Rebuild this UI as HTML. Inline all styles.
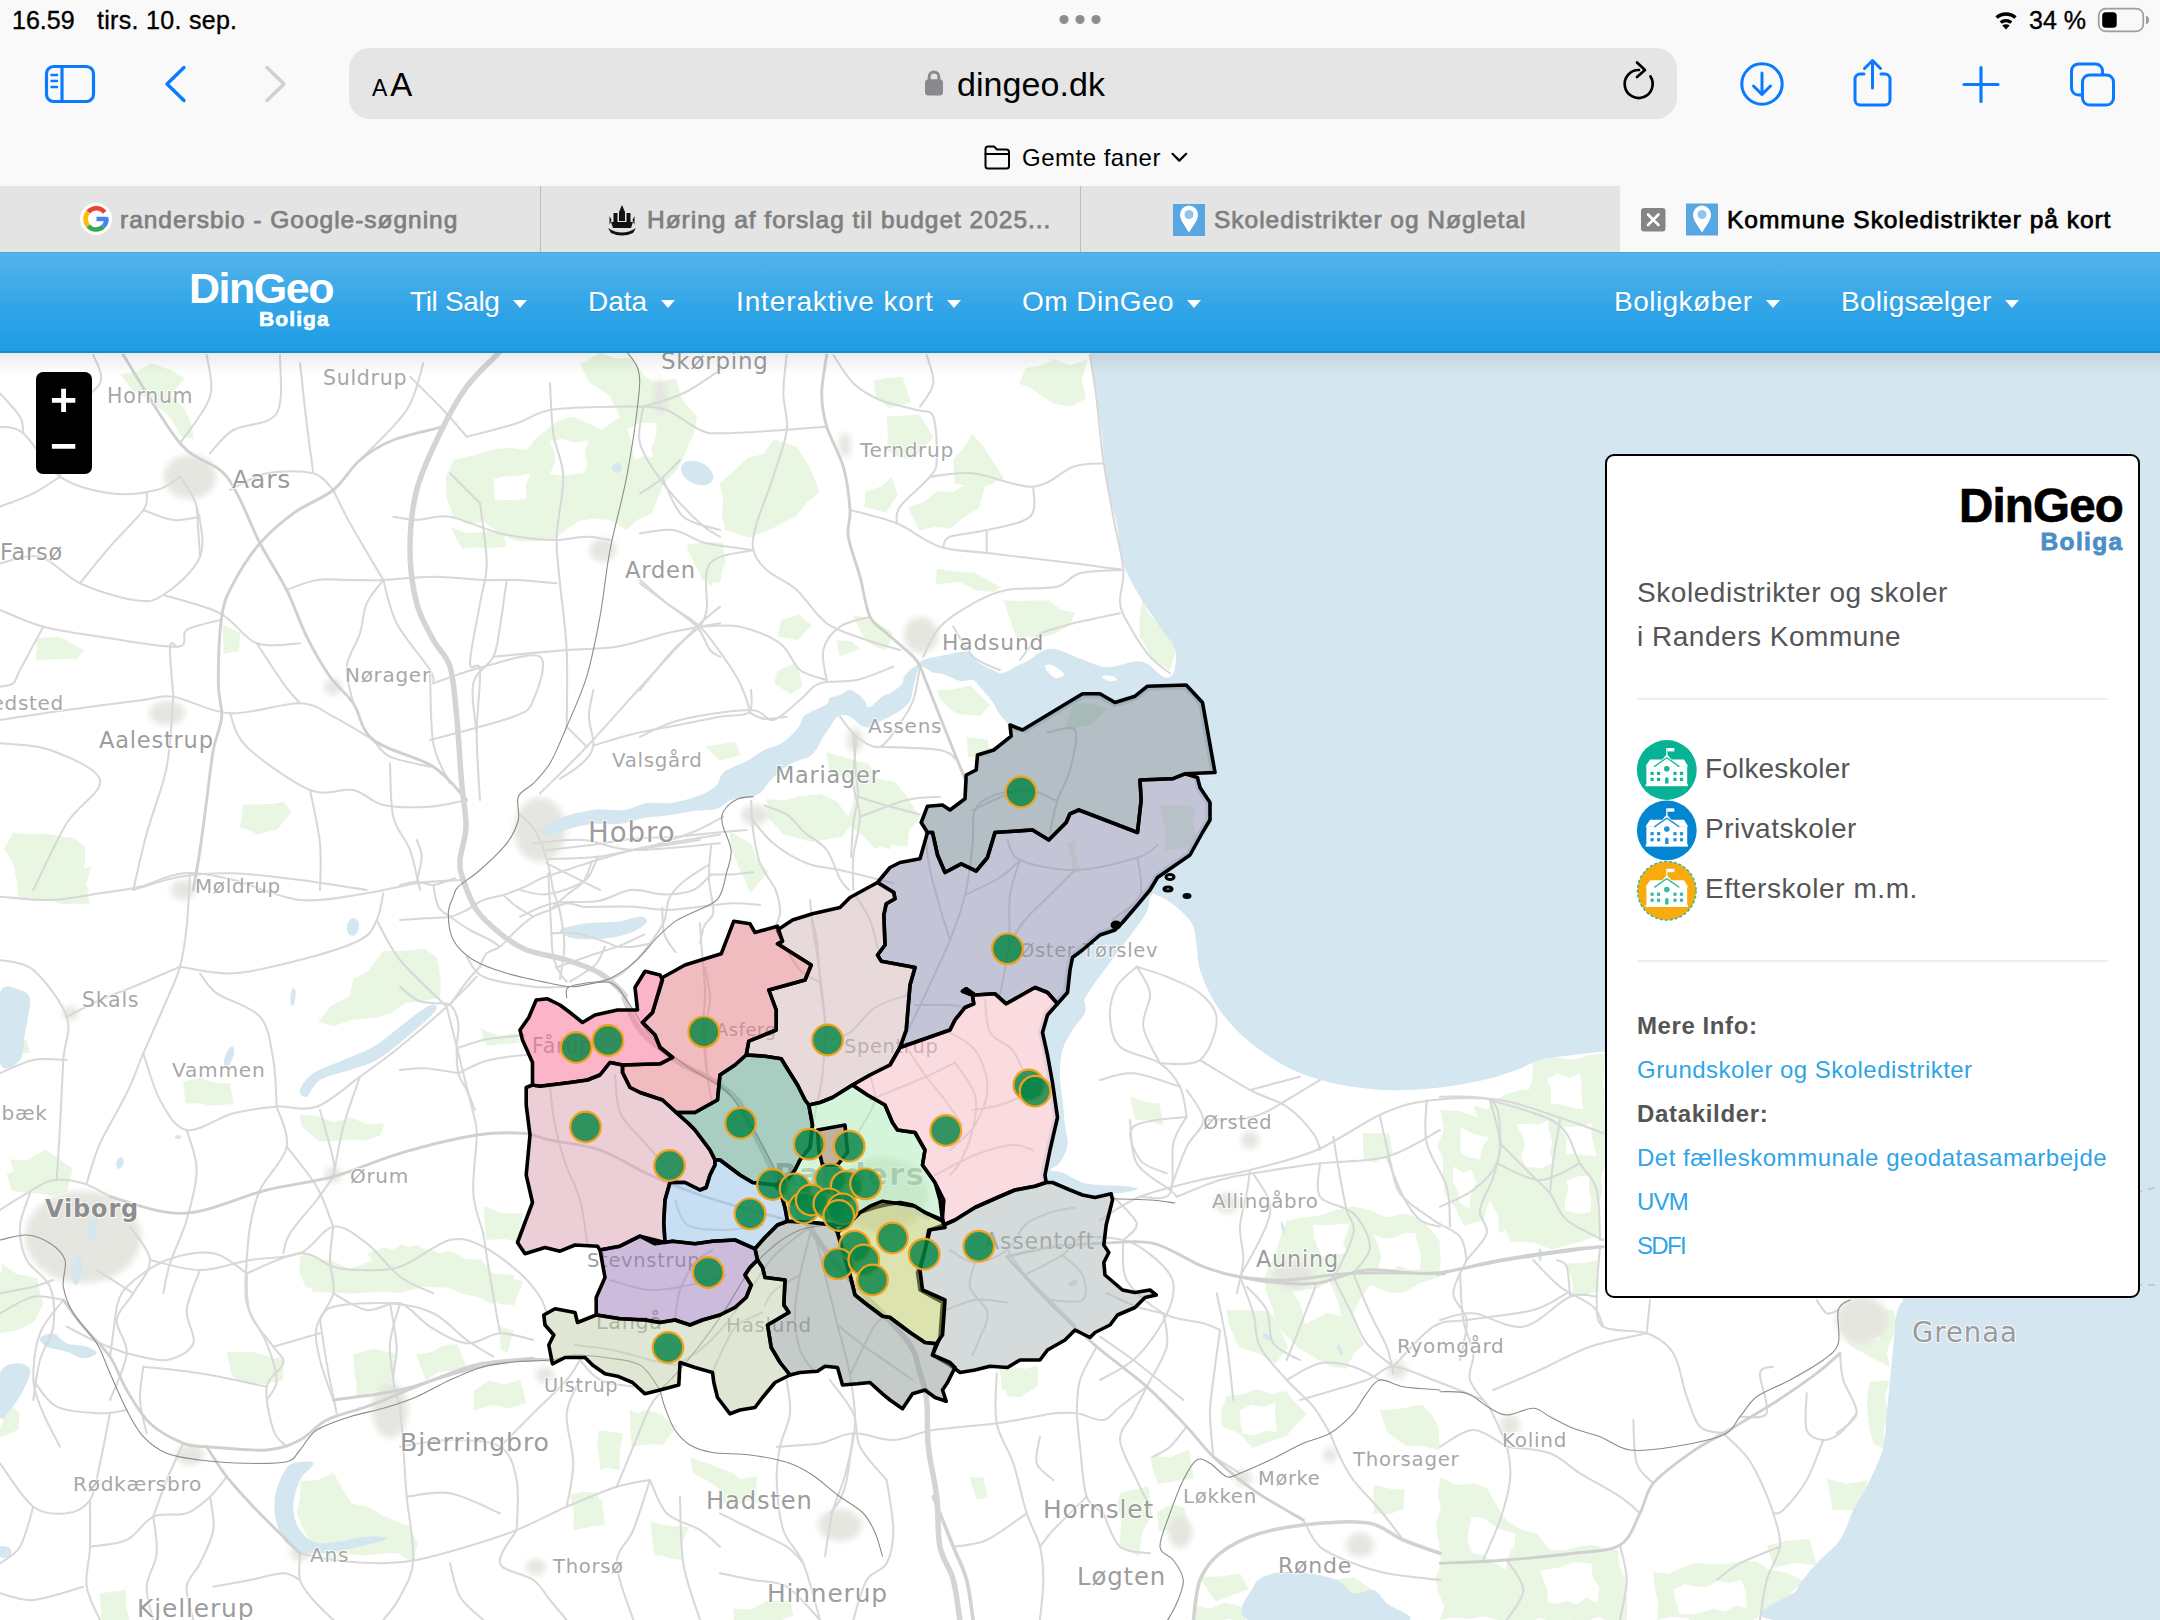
<!DOCTYPE html>
<html lang="da">
<head>
<meta charset="utf-8">
<title>Kommune Skoledistrikter på kort</title>
<style>
*{box-sizing:border-box;margin:0;padding:0}
html,body{width:2160px;height:1620px;overflow:hidden;background:#f9f9f9;font-family:"Liberation Sans",sans-serif}
.abs{position:absolute}
#chrome{position:absolute;left:0;top:0;width:2160px;height:252px;background:#f9f9f9}
.st{position:absolute;top:5px;font-size:25px;line-height:30px;color:#000;font-weight:400;-webkit-text-stroke:0.350px #000;white-space:nowrap}
#url{position:absolute;left:349px;top:48px;width:1328px;height:71px;border-radius:21px;background:#e5e5e6}
#url .aa{position:absolute;left:23px;top:15px;line-height:44px;color:#000;white-space:nowrap}
#url .host{position:absolute;left:608px;top:16px;font-size:34px;line-height:40px;color:#000;white-space:nowrap;letter-spacing:0.06px}
#gem{position:absolute;left:1022px;top:142px;font-size:24px;line-height:32px;color:#000;white-space:nowrap;letter-spacing:0.5px}
#tabs{position:absolute;left:0;top:186px;width:2160px;height:66px;background:#e4e4e4}
.tab{position:absolute;top:0;height:66px;width:540px;font-size:24.500px;line-height:66px;color:#7f7f7f;font-weight:400;-webkit-text-stroke:0.750px #7f7f7f;letter-spacing:0.98px;white-space:nowrap}
.tab span.t{position:absolute;top:1px;white-space:nowrap}
.tab.sep{border-left:1px solid #bdbdbd}
.tab.act{background:#f9f9f9;color:#000;-webkit-text-stroke:0.750px #000}
#nav{position:absolute;left:0;top:252px;width:2160px;height:101px;background:linear-gradient(#54b4eb 0%,#2fa4e7 60%,#1d9ce5 100%);border-bottom:2px solid #178acc;border-top:1px solid #4aa6dc}
.ni{position:absolute;top:283px;font-size:28px;line-height:38px;color:#fff;white-space:nowrap;text-shadow:0 1px 0 rgba(0,0,0,.1)}
.caret{position:absolute;top:300px;width:0;height:0;border-left:7.5px solid transparent;border-right:7.5px solid transparent;border-top:8px solid #fff}
#map{position:absolute;left:0;top:353px;width:2160px;height:1267px;background:#fff;overflow:hidden}
#zoom{position:absolute;left:36px;top:372px;width:56px;height:102px;background:#000;border-radius:7px}
#panel{position:absolute;left:1605px;top:454px;width:535px;height:844px;background:#fff;border:2px solid #000;border-radius:9px;color:#555}
#panel .p{margin-top:1.500px;position:absolute;left:30px;white-space:nowrap;font-size:28px;line-height:44px}
#panel a{color:#2fa4e7;text-decoration:none}
#panel hr{position:absolute;left:30px;width:471px;border:0;border-top:2px solid #eee}
</style>
</head>
<body>
<div id="chrome">
  <div class="st" style="left:12px">16.59</div>
  <div class="st" style="letter-spacing:0.3px;left:97px">tirs. 10. sep.</div>
  <div class="st" style="left:2029px">34 %</div>
  <div id="url">
    <div class="aa"><span style="font-size:23px">A</span><span style="font-size:33px;margin-left:3px">A</span></div>
    <div class="host">dingeo.dk</div>
  </div>
  <div id="gem">Gemte faner</div>
  <div id="tabs">
    <div class="tab" style="left:0"><span class="t" style="left:120px">randersbio - Google-søgning</span></div>
    <div class="tab sep" style="left:540px"><span class="t" style="left:106px">Høring af forslag til budget 2025...</span></div>
    <div class="tab sep" style="left:1080px"><span class="t" style="left:133px">Skoledistrikter og Nøgletal</span></div>
    <div class="tab act" style="left:1620px"><span class="t" style="left:107px">Kommune Skoledistrikter på kort</span></div>
  </div>

<svg class="abs" style="left:0;top:0" width="2160" height="252" viewBox="0 0 2160 252" fill="none" stroke-linecap="round" stroke-linejoin="round">
  <g fill="#8e8e93"><circle cx="1064" cy="19.5" r="4.6"/><circle cx="1080" cy="19.5" r="4.6"/><circle cx="1096" cy="19.5" r="4.6"/></g>
  <!-- sidebar -->
  <g stroke="#0a7aff" stroke-width="3.2">
    <rect x="46.5" y="66.5" width="47" height="35" rx="7"/>
    <path d="M62 67V101"/>
    <path d="M51.5 75H57M51.5 81H57M51.5 87H57" stroke-width="2.4"/>
    <path d="M184 67.5L167 84L184 100.5" stroke-width="3.4"/>
  </g>
  <path d="M267 67.5L284 84L267 100.5" stroke="#d0d0d2" stroke-width="3.4"/>
  <!-- lock -->
  <rect x="925" y="79.300" width="18" height="16.300" rx="3.500" fill="#8a8a8e"/>
  <path d="M929.200 81V76.800a4.800 4.800 0 0 1 9.600 0V81" stroke="#8a8a8e" stroke-width="3"/>
  <!-- reload -->
  <path d="M1650.5 76.5A14 14 0 1 1 1639 70" stroke="#000" stroke-width="2.7"/>
  <path d="M1637 62.5L1645 70L1637 77" stroke="#000" stroke-width="2.7"/>
  <!-- download -->
  <g stroke="#0a7aff" stroke-width="3">
    <circle cx="1762" cy="84" r="20.2"/>
    <path d="M1762 73V94M1753.5 86L1762 94.5L1770.5 86"/>
    <!-- share -->
    <path d="M1864 74H1860a5 5 0 0 0 -5 5V100a5 5 0 0 0 5 5H1885a5 5 0 0 0 5 -5V79a5 5 0 0 0 -5 -5H1881"/>
    <path d="M1872.5 61V88M1864.5 68.5L1872.5 60.5L1880.5 68.5"/>
    <!-- plus -->
    <path d="M1964 84.5H1998M1981 67.5V101.5" stroke-width="3.2"/>
    <!-- tabs -->
    <rect x="2071.500" y="64" width="31" height="31" rx="7"/>
    <rect x="2082.500" y="75" width="31" height="30" rx="7" fill="#f9f9f9"/>
  </g>
  <!-- wifi -->
  <g stroke="#000" stroke-width="3.4" stroke-linecap="butt">
    <path d="M1996.5 17.5A14.500 14.500 0 0 1 2015.500 17.500" />
    <path d="M2000.700 22.500A8.500 8.500 0 0 1 2011.300 22.500" />
  </g>
  <path d="M2006 29.500L2002.300 25.600A5.400 5.400 0 0 1 2009.700 25.600Z" fill="#000"/>
  <!-- battery -->
  <rect x="2098.700" y="8.700" width="44.600" height="22.600" rx="7" stroke="#9c9c9c" stroke-width="1.7"/>
  <rect x="2102.200" y="12.200" width="14.500" height="15.600" rx="3.500" fill="#000"/>
  <path d="M2146 15.500v9a4.800 4.800 0 0 0 0 -9Z" fill="#9c9c9c"/>
  <!-- folder -->
  <g stroke="#000" stroke-width="2">
   <path d="M985.500 152.500V149a2.500 2.500 0 0 1 2.500 -2.500H994l3 3H1006.500a2.500 2.500 0 0 1 2.500 2.500V166a2.500 2.500 0 0 1 -2.500 2.500H988a2.500 2.500 0 0 1 -2.500 -2.500Z"/>
   <path d="M985.500 154H1009"/>
   <path d="M1172.500 153.800L1179.300 160.600L1186.200 153.800" stroke-width="2.200"/>
  </g>
  <!-- google favicon -->
  <circle cx="96" cy="219" r="16" fill="#fff"/>
  <g stroke-width="4.600" stroke-linecap="butt">
    <path d="M104.600 212.300A10.500 10.500 0 0 0 88.200 212" stroke="#ea4335"/>
    <path d="M88.200 212A10.500 10.500 0 0 0 88.200 226" stroke="#fbbc05"/>
    <path d="M88.200 226A10.500 10.500 0 0 0 103.500 226.400" stroke="#34a853"/>
    <path d="M103.500 226.400A10.500 10.500 0 0 0 106.500 219H96.500" stroke="#4285f4"/>
  </g>
  <!-- randers favicon -->
  <g fill="#111">
    <path d="M622 205l3 7v9h-6v-9z"/><rect x="613.500" y="213" width="4" height="10"/><rect x="626.500" y="213" width="4" height="10"/>
    <path d="M611 222h22l-2 6h-18z"/><path d="M608 228q14 9 28 0l-3 5q-11 5 -22 0z"/>
    <path d="M609.500 216l2 4l-2 5zM634.500 216l-2 4l2 5z"/>
  </g>
  <!-- map-pin favicons -->
  <g>
    <rect x="1173" y="204" width="32" height="32" fill="#58a6e2"/>
    <path d="M1189 232.500c-5 -8 -9 -12.500 -9 -18a9 9 0 0 1 18 0c0 5.500 -4 10 -9 18z" fill="#fff"/>
    <circle cx="1189" cy="214.500" r="4.500" fill="#8ec4ee"/>
    <rect x="1686" y="203.500" width="32" height="32" fill="#58a6e2"/>
    <path d="M1702 232.500c-5 -8 -9 -12.500 -9 -18a9 9 0 0 1 18 0c0 5.500 -4 10 -9 18z" fill="#fff"/>
    <circle cx="1702" cy="214.500" r="4.500" fill="#8ec4ee"/>
  </g>
  <!-- close -->
  <rect x="1641" y="208" width="24.500" height="23.500" rx="3" fill="#858585"/>
  <path d="M1648 214.500L1658.500 225M1658.500 214.500L1648 225" stroke="#fff" stroke-width="2.600"/>
</svg>
</div>
<div id="nav"></div>
<div class="abs" id="logo1" style="left:189px;top:262px;font-size:43px;line-height:52px;font-weight:700;color:#fff;letter-spacing:-1.5px;white-space:nowrap">DinGeo</div>
<div class="abs" id="logo2" style="left:259px;top:305px;font-size:21px;line-height:28px;font-weight:700;color:#fff;white-space:nowrap;letter-spacing:1.1px;-webkit-text-stroke:0.7px #fff">Boliga</div>
<div class="ni" style="letter-spacing:-0.35px;left:410px">Til Salg</div><div class="caret" style="left:513px"></div>
<div class="ni" style="left:588px">Data</div><div class="caret" style="left:661px"></div>
<div class="ni" style="letter-spacing:0.87px;left:736px">Interaktive kort</div><div class="caret" style="left:947px"></div>
<div class="ni" style="letter-spacing:0.47px;left:1022px">Om DinGeo</div><div class="caret" style="left:1187px"></div>
<div class="ni" style="letter-spacing:0.47px;left:1614px">Boligkøber</div><div class="caret" style="left:1766px"></div>
<div class="ni" style="letter-spacing:0.24px;left:1841px">Boligsælger</div><div class="caret" style="left:2005px"></div>
<div id="map">
<!--MAPSTART--><svg style="position:absolute;left:0;top:-353px" width="2160" height="1620" viewBox="0 0 2160 1620" font-family="'DejaVu Sans','Liberation Sans',sans-serif">
<defs><filter id="bl" x="-50%" y="-50%" width="200%" height="200%"><feGaussianBlur stdDeviation="3"/></filter><linearGradient id="shd" x1="0" y1="0" x2="0" y2="1"><stop offset="0" stop-color="#000" stop-opacity=".075"/><stop offset="1" stop-color="#000" stop-opacity="0"/></linearGradient></defs>
<rect x="0" y="340" width="2160" height="1280" fill="#fff"/>
<g fill="#e9f7e2">
<path d="M453.8 459.8 L473.7 455.6 L493.3 449.3 L510 447.8 L526.8 450.1 L536.1 437.8 L547.6 429.1 L559.4 420 L573.4 416.5 L586.4 422.4 L601.6 430 L620 416.7 L609.2 395.1 L588.9 382.6 L580.4 364.3 L600 352.8 L616.6 358.7 L629.8 357.5 L641 370.8 L651.2 386.2 L666 390.3 L674.9 401.1 L682 415.2 L691.7 426.2 L686.9 450.1 L677.9 468.7 L663.9 483.5 L657.3 499.7 L651.6 513.4 L638.1 519.6 L626.6 530.2 L611.2 520.3 L594.3 518.6 L578.8 520.9 L566.5 529.6 L551.6 540.7 L533.7 541.4 L516.5 540.9 L501.8 534.4 L483.6 521.8 L467.3 524.4 L453.2 516.7 L446.5 497.5 L446.1 476.1Z"/>
<path d="M450 526.7 L466.7 533.1 L483.3 532.4 L502 529.2 L506.7 546.7 L491.2 548.3 L475.5 547.5 L462.3 548.8Z"/>
<path d="M120.4 374.1 L135.4 372.4 L151.4 362.9 L169.6 369.8 L184.6 377.9 L171.6 394.6 L185.2 410.3 L191.7 424.6 L193.5 439.1 L180.9 436.3 L174 423 L165.1 412.6 L149.7 400.5 L132.5 390.5Z"/>
<path d="M36.4 637.7 L59.8 637 L84.3 650.6 L76.7 659.1 L58.4 658.9 L36.1 660.6Z"/>
<path d="M222.7 624.5 L240.3 633 L238.6 650.9 L223.6 653.9Z"/>
<path d="M243.4 804.4 L257.9 804.4 L272.4 803.7 L283.1 801.8 L291.6 811.9 L277.4 829.6 L257.6 834.2 L239.7 826.7Z"/>
<path d="M13 832.6 L28 834.5 L43.3 833.2 L58.4 835.7 L73.6 837.9 L85.2 846.5 L85.3 861.7 L81.2 877.8 L90 891.1 L76 887.6 L62 892 L48 887.3 L34 887.9 L19.3 890.2 L15.9 876.6 L12.7 862.8 L4.1 849.1Z"/>
<path d="M686.5 545.1 L703 541.9 L718.6 543.3 L723.8 563.3 L720.1 583 L702.1 580.2 L696.9 565.8Z"/>
<path d="M640.2 374.3 L656.2 382.5 L676.3 378.4 L681.7 399.2 L697 417.1 L693.9 433.6 L687.8 446.1 L676.3 460.6 L660.4 465.5 L639.6 460 L639.6 443.3 L640 426.7 L637.2 410 L643 393.4Z"/>
<path d="M719.8 483 L734.3 470.7 L748.1 457.4 L763.6 454.3 L773.9 438.9 L796.7 446.7 L809.8 467.2 L819.7 492.3 L806.3 503.1 L796.4 515.7 L775.4 526.9 L749.7 537.8 L725.1 529.9 L721.8 514.5 L723.1 498.7Z"/>
<path d="M873.4 380.6 L888.2 377.7 L902.6 376.9 L911 402.4 L888.7 408 L876.2 396.7Z"/>
<path d="M886.7 416.3 L905 415.5 L919.8 414.8 L933.5 436.9 L923.2 448.3 L913.6 459.3 L899 457.7 L886.8 450 L887.9 433.4Z"/>
<path d="M953.1 459.9 L964.4 447.5 L972 434 L982.9 445.2 L989.8 456.9 L1003.8 477.7 L989.1 485.2 L974.2 487.4 L955 483.3Z"/>
<path d="M865.6 491.5 L880.9 486.4 L891.7 477.2 L897.8 494.5 L886.2 512.8 L864.3 506.7Z"/>
<path d="M907.9 507.2 L924.4 501.5 L936.9 491.4 L952.8 491.7 L967.5 483.5 L985.5 483.6 L979 508.2 L964.3 517.1 L950.2 528.5 L934.8 526.7 L919.2 530.4Z"/>
<path d="M1019.1 383.4 L1025.8 368.1 L1040.2 365.4 L1054.2 359.1 L1069.2 365.5 L1087.6 359.6 L1081.6 380.3 L1085.9 398.6 L1070.5 406.8 L1053.5 403.8 L1032.4 388.9Z"/>
<path d="M936.8 568.8 L955 571.5 L973.6 572.6 L986.9 579.6 L1000.6 587.3 L993.7 591.9 L976 590.4 L960 582.1 L935.7 584.4Z"/>
<path d="M1003.3 600.2 L1018.6 601.1 L1031.8 600.6 L1048.4 600.5 L1061.4 610 L1075.1 612.5 L1069.7 625.3 L1055.8 633.4 L1040.6 637.5 L1015.8 637.2 L1008.9 616.3Z"/>
<path d="M1142.3 598.3 L1148.8 614.2 L1161.3 626 L1176 650.4 L1170 670.1 L1153.3 660 L1139.8 636.7 L1139.6 618.4Z"/>
<path d="M853 614.9 L871.7 618.7 L893.1 633.2 L886.7 649.9 L873 645.9 L864.3 638.9Z"/>
<path d="M780.6 620.3 L798.8 614.5 L811.6 625 L798 639.9 L777.8 636.7Z"/>
<path d="M836.1 640.3 L851.9 641 L859.6 648.8 L839.8 656.7Z"/>
<path d="M777.5 670.7 L796.4 662.3 L803 686.3 L790.3 694 L773.9 683.3Z"/>
<path d="M937.1 690.5 L955.4 689 L970.4 685.3 L990.1 705 L980.1 715.9 L956.3 713.8 L940.3 699.9Z"/>
<path d="M826.2 751.9 L851.6 759.2 L868.3 763.5 L877.5 778.7 L894.9 781.9 L905.3 793.9 L920.1 818 L909.5 829.2 L907.3 846.4 L889.6 844.8 L874.7 848.6 L861.7 835 L846.2 823.2 L853.2 803.8 L855.3 779.4 L830 774.2Z"/>
<path d="M766.5 798.9 L784.1 800.4 L799.5 796.3 L820.4 794.1 L837.1 801.7 L852.6 822.3 L842.5 836.6 L827.6 839.3 L811.7 842.1 L797.4 838.3 L782.8 833.8 L767.5 816.7Z"/>
<path d="M686.9 548.9 L703.1 542.3 L722.5 542.5 L725.9 562.8 L710.8 586.4 L695.7 565.9Z"/>
<path d="M729.3 831.2 L751.7 844.1 L756.3 858.5 L769 871.5 L750.3 892.5 L739.6 869.5 L731.9 850.2Z"/>
<path d="M870.9 813.3 L896.6 823.7 L890.3 849.2 L870.4 843.7Z"/>
<path d="M966.6 737.1 L988.1 739.8 L990.5 756.9 L968.1 757Z"/>
<path d="M1073.3 703.6 L1088.5 703.1 L1106.8 709 L1089.8 725.3 L1064.2 729.4Z"/>
<path d="M1159.6 805.6 L1176.3 804.9 L1194.3 806.6 L1193.4 823.5 L1197.7 843.1 L1182.8 848.3 L1164.3 850.4 L1165.6 829.6Z"/>
<path d="M705.8 746.3 L735.4 741.9 L740.7 754.9 L719.6 761.1Z"/>
<path d="M1066.9 843.9 L1075.5 840.1 L1075.5 855.3 L1080.6 871.9 L1071.4 873.2 L1071.8 857.9Z"/>
<path d="M16.7 870.3 L31.4 870.1 L46.2 871.8 L60.8 871.6 L75.5 870.8 L91.2 866.7 L86 885 L89.9 904 L75.8 903.7 L61.7 904.3 L48 899.2 L33.7 901.1 L18 896.9Z"/>
<path d="M383.3 950.4 L397.9 951.1 L412.4 950 L424 948.6 L436.6 957.2 L439.1 969.5 L441.1 984.9 L439.6 997.8 L422.9 1001.1 L405.6 1003 L390.6 1013.6 L373.6 1017.9 L352.8 1019.8 L333.6 1026 L318.2 1021.7 L330.9 1005.7 L349.8 996 L353.4 978.8 L368.2 971.3Z"/>
<path d="M480.1 1028.5 L499.6 1036 L515.9 1033.3 L520 1042.9 L501.6 1044.1 L486.6 1046Z"/>
<path d="M183.2 1081.6 L200.2 1077.4 L216.6 1083.3 L230.2 1083.3 L233.5 1103.7 L217.8 1105.4 L202.3 1103.3 L185.5 1103.5Z"/>
<path d="M299.8 1114.5 L316.8 1116 L333.2 1122 L350.2 1117.2 L366.5 1124 L384.4 1123.6 L379.9 1135.7 L365.2 1140.5 L350.1 1139.7 L335.1 1141.3 L319.2 1141.3 L302 1126.7Z"/>
<path d="M300.8 1250.8 L317 1257.9 L334.2 1261.8 L349.6 1269.1 L366.9 1262.7 L383.9 1255.7 L400.4 1244.5 L416.9 1248.8 L433.9 1250.5 L448.9 1259.3 L467.4 1261.6 L482.1 1273.2 L503.7 1277.8 L492.3 1304.3 L478.2 1297.3 L463.1 1294 L448.8 1287.8 L432.9 1283.4 L416.6 1288.8 L400.2 1292.9 L383.4 1291.4 L366.6 1292.8 L349.9 1293.8 L333.3 1292.4 L312.6 1291.9 L310.1 1270.9Z"/>
<path d="M9.9 1159.6 L27.3 1160 L45.2 1149.5 L60.9 1159.9 L72.9 1168.4 L66.8 1191.8 L50.9 1195.5 L35.5 1192.5 L23.2 1188.9 L14.5 1175.2Z"/>
<path d="M226.8 1352.2 L241 1351.7 L255.2 1352 L268.9 1359.6 L282.6 1356.7 L283.4 1378.3 L265.6 1378.4 L247.7 1378.8 L232.1 1376.4Z"/>
<path d="M353.3 1354.6 L373.3 1349 L395.3 1353.3 L393.3 1382.5 L373.3 1377.9 L354.9 1380Z"/>
<path d="M483.7 1205.9 L501.5 1213.4 L523.2 1213.3 L520.3 1228.3 L520.2 1241.8 L503.6 1239 L486.3 1240 L485 1225Z"/>
<path d="M0.1 1035.9 L15 1038.7 L26.7 1040 L30 1052.9 L15 1052.5 L-4.2 1050Z"/>
<path d="M0.7 1271.4 L20.1 1280 L22.7 1295.8 L19.2 1311.2 L18.1 1330.3 L-4.4 1333.3 L-1.9 1318.3 L-3.4 1303.3 L-1.7 1288.3Z"/>
<path d="M186.4 1086.8 L206.8 1084.1 L225.9 1086.8 L230.5 1103.5 L209.6 1105.8 L190.1 1100Z"/>
<path d="M300.4 1255.4 L316.8 1261.1 L333.5 1266.4 L354.1 1281.2 L333.3 1293.2 L305.8 1286.9 L299.3 1272.6Z"/>
<path d="M366.8 1253.7 L382.9 1247.8 L400.3 1250.8 L417 1245 L432.6 1253.9 L450.6 1250.7 L465.8 1258.9 L481.2 1259.8 L491.7 1272.2 L505.3 1277.3 L523.4 1280.9 L513.8 1305.4 L499.1 1304.1 L486.7 1296.6 L474.4 1288.7 L459.7 1289.8 L444.7 1287.6 L429.6 1287.2 L414.6 1285.6 L400 1280 L387 1273.5 L375.7 1264.8Z"/>
<path d="M226.7 1352.8 L242.2 1355.9 L257.8 1353.2 L271.2 1357.6 L283.3 1379.9 L266.6 1384.1 L250 1384.1 L235.3 1379.4Z"/>
<path d="M356.7 1356.7 L372 1352.6 L373.8 1367.1 L381.4 1378.2 L396.7 1393.5 L378 1390.8 L356.3 1397 L356.7 1376.8Z"/>
<path d="M416 1354.5 L431.1 1352.3 L444.7 1344.9 L457.2 1344.1 L467.5 1369 L453.2 1370.7 L438.8 1371.9 L425.9 1380.4Z"/>
<path d="M473.9 1391 L488.3 1380.5 L504.7 1384.2 L520.1 1380 L526.4 1402.7 L510.1 1408.6 L493.1 1405.1 L473.7 1410.4Z"/>
<path d="M300.2 1481 L317.3 1480.1 L333.6 1473.1 L341.8 1487.8 L351.7 1503.6 L368.2 1506.8 L382.4 1515.3 L397.5 1521.9 L410.1 1526.7 L417.5 1543.3 L412.9 1562.9 L398.4 1553.3 L382.5 1553.3 L367.1 1555.4 L349.6 1554.5 L331.4 1562.3 L320.8 1551 L309.5 1540.2 L302.7 1527.5 L296.7 1513.3 L300.1 1496.7Z"/>
<path d="M598.8 1430.2 L623.3 1433.3 L619.5 1451.7 L620 1470.2 L600.8 1467 L597.3 1446.6Z"/>
<path d="M630 1409.6 L645 1417.4 L663.1 1413 L659.5 1430.2 L663.3 1443.6 L648.3 1444.5 L631.5 1446.9 L630.3 1430.1Z"/>
<path d="M578.8 1497.3 L602.8 1499.9 L600 1523.5 L580.2 1520Z"/>
<path d="M1.5 1262.9 L16.4 1274.1 L37.2 1278.1 L39.9 1293.4 L43.7 1303.7 L34.7 1321.3 L20 1329 L1.2 1333.3 L3.5 1316.7 L-4.3 1300 L2.1 1283.3Z"/>
<path d="M6.8 1174 L22.8 1167.4 L39.4 1167.8 L51.6 1176.9 L69 1183.4 L46.7 1193.8 L29.9 1193 L11.5 1190.7Z"/>
<path d="M1.2 1397.8 L19.5 1412.7 L18.7 1429.5 L-4.3 1440 L3.1 1420Z"/>
<path d="M650.2 1521.6 L668.3 1525.7 L688.8 1526.9 L682.2 1543.1 L683.2 1560.3 L668 1558.1 L656.8 1552.9 L654.3 1538Z"/>
<path d="M100 1593.3 L126.2 1590.1 L125.6 1605.3 L130 1621.6 L115 1621.6 L101.7 1620Z"/>
<path d="M630.6 1418.8 L644.5 1409.6 L657 1413 L677 1426.2 L662.4 1445.3 L638.5 1439.3Z"/>
<path d="M599.9 1444.5 L619.3 1439.8 L619.1 1461.4 L599.9 1470Z"/>
<path d="M690.1 1457.3 L714.5 1466 L732.9 1473 L746.7 1484.4 L760 1504.3 L737.2 1496.2 L720.9 1489.7 L706.5 1480.2 L692.7 1472.5Z"/>
<path d="M569.9 1494.2 L584.8 1491.8 L596.9 1493 L603 1508.7 L605 1524.7 L589.9 1527 L573.6 1530.2 L573.7 1512.3Z"/>
<path d="M650.8 1526.2 L675.6 1534.9 L680 1557.3 L654.5 1555.1Z"/>
<path d="M999.6 1366.2 L1022.6 1367.8 L1027.5 1385.8 L1001.7 1390.1Z"/>
<path d="M969.7 1477.2 L983.5 1477.5 L987.5 1497.8 L976.2 1499.6Z"/>
<path d="M499.3 1326.5 L513.6 1330.5 L507.5 1353 L500.9 1350Z"/>
<path d="M498.6 1273.4 L514.3 1275.3 L510 1290.4 L496.7 1290Z"/>
<path d="M999.7 1371.7 L1016.9 1371.1 L1037.6 1365.5 L1038.1 1386.1 L1020.6 1397.2 L1007.7 1396.1Z"/>
<path d="M1130.6 1096.2 L1149.2 1103.5 L1152.4 1112.4 L1135.4 1120.4Z"/>
<path d="M1264.8 1276 L1271.7 1262.5 L1277.2 1248.5 L1281.4 1234.1 L1286.8 1220.8 L1303.3 1217.4 L1320 1215.2 L1336.3 1209.8 L1353.8 1206.5 L1370.3 1210.3 L1386.3 1217.5 L1404 1213.3 L1420.9 1219.1 L1430.5 1229.5 L1439.5 1240 L1440.6 1260 L1438.9 1277 L1420.3 1282.9 L1403.4 1292.7 L1387.7 1292.6 L1370.6 1284.7 L1360.7 1298.1 L1353.6 1313.2 L1357.5 1331 L1364.3 1344.3 L1353.8 1353.8 L1346.2 1369.1 L1329.5 1365.8 L1315.2 1358.1 L1298.5 1348.1 L1285 1334.4 L1274.9 1322.2 L1272.3 1306.4 L1266 1292Z"/>
<path d="M1226.2 1309.9 L1246.7 1310.1 L1269.7 1311.5 L1279.6 1328.2 L1288.1 1347.7 L1275 1363.8 L1258.7 1353.4 L1238.8 1347.3 L1229.5 1326.8Z"/>
<path d="M1226.7 1396.3 L1241.6 1394.5 L1256.2 1389.3 L1272 1394.1 L1285.5 1391 L1295.5 1402.7 L1306.9 1413.4 L1295.5 1425.7 L1286 1436.6 L1269.7 1441.7 L1252.5 1447.9 L1240.3 1433.7 L1221.7 1426.5 L1221.3 1411.3Z"/>
<path d="M1149.8 1455.6 L1169.1 1457.3 L1189.3 1449.4 L1193.7 1478.5 L1176.8 1480.7 L1157.8 1484.1 L1153.3 1470.6Z"/>
<path d="M1120.3 1492.7 L1148.3 1486.5 L1152.3 1513.9 L1142.2 1532.6 L1138.9 1556.6 L1119.8 1546.7 L1120.5 1532.5 L1121 1518.3 L1116.8 1504.2Z"/>
<path d="M1367.2 1142.8 L1390.3 1136.2 L1389.4 1156.2 L1372.1 1163Z"/>
<path d="M1379.5 1410.2 L1399.8 1408.7 L1422.1 1404.6 L1431.6 1415.1 L1438.3 1426.7 L1439.7 1449.8 L1423.2 1446.3 L1405.6 1445.8 L1387.5 1432.6Z"/>
<path d="M1373.5 1484.7 L1390 1488.7 L1404.8 1489.7 L1403.3 1509.2 L1388.3 1514.5 L1373.6 1513.3Z"/>
<path d="M1320 1583.4 L1336.6 1579.6 L1353 1577.1 L1373.8 1590.9 L1354.6 1597.3 L1335.3 1594.4Z"/>
<path d="M1199.5 1576.8 L1220 1576.6 L1240 1573.3 L1248.9 1589.2 L1230.9 1595.6 L1215.6 1602Z"/>
<path d="M1193.3 1605 L1208.7 1608.8 L1224.6 1602.4 L1241 1606.2 L1246.7 1624.1 L1228.9 1618.7 L1211.1 1622.8 L1191.6 1620Z"/>
<path d="M733.4 1608.8 L751.3 1609.3 L768.6 1600.3 L790.8 1601.7 L793.3 1615.6 L778.3 1621.6 L763.3 1622.7 L748.3 1620 L733.8 1620Z"/>
<path d="M719.7 1477.3 L736.8 1479.4 L756.8 1476.2 L756.4 1496.4 L738.6 1504.4 L719.7 1503.3Z"/>
<path d="M1157 1512.6 L1171.2 1504.2 L1183.7 1507.2 L1190.2 1528.3 L1159.1 1531.4Z"/>
<path d="M1532.8 1060.2 L1552.8 1057.2 L1573.6 1059.7 L1588.3 1055.4 L1605.3 1053.3 L1604.8 1067.3 L1602.9 1081.3 L1604.9 1095.3 L1601.4 1109.3 L1606.7 1123.3 L1604.5 1137.3 L1605.3 1151.3 L1601 1165.3 L1600.3 1179.3 L1603.3 1193.2 L1583.4 1185.8 L1574.1 1163.8 L1558 1161.8 L1541.4 1167.9 L1532.6 1154.8 L1527.1 1140.3 L1531.8 1124.7 L1539.8 1115.7 L1528 1093.1 L1532.5 1078.4Z"/>
<path d="M1473.5 1105.8 L1502.8 1113 L1498 1130.4 L1503.7 1145.6 L1483.5 1139.9 L1480 1122.8Z"/>
<path d="M1362.8 1133 L1389 1133.4 L1393.3 1155.5 L1363.5 1160.5Z"/>
<path d="M1443 1157.3 L1459.6 1154.7 L1475.5 1157.5 L1484.4 1168.8 L1492.1 1179.7 L1489.6 1200.3 L1483.4 1220.4 L1463.2 1225.4 L1456 1208.9 L1444.6 1193.5 L1443 1176.9Z"/>
<path d="M1500.4 1189.6 L1515.3 1192.1 L1528.4 1196.5 L1531.4 1212 L1525.8 1222.8 L1511 1227 L1498.9 1233.5 L1498 1213.3Z"/>
<path d="M1130.1 1099.3 L1144.9 1102.2 L1159.5 1103.4 L1163.5 1125.9 L1148.9 1120.7 L1137.4 1119.3Z"/>
<path d="M1506.8 1093.7 L1522.2 1089.4 L1537.8 1089.5 L1553.3 1087 L1568.8 1084.3 L1584.4 1085.9 L1602.9 1086.5 L1604.2 1101.5 L1604.7 1116.5 L1606.7 1131.5 L1602.8 1146.7 L1606.2 1161.8 L1601.1 1176.7 L1602.8 1191.7 L1597.4 1206.6 L1599.1 1221.6 L1599.2 1234.4 L1582.9 1241 L1566 1245.6 L1551.4 1249.6 L1533.2 1242.4 L1510.6 1241.4 L1503.9 1226.4 L1496.1 1212 L1488.7 1199 L1476.2 1186.2 L1463.2 1178 L1446.6 1165.4 L1437 1146.7 L1443.8 1130 L1440.3 1109.8 L1460.3 1111.2 L1482.5 1119.2 L1492 1102Z"/>
<path d="M1843.3 1313.7 L1859.7 1308.8 L1876.5 1309.1 L1893.9 1310 L1896.8 1324.4 L1891.7 1338.4 L1886.8 1352.3 L1889.8 1367.3 L1871.5 1357.4 L1850.8 1346.3 L1840.7 1330.4Z"/>
<path d="M1870 1382.3 L1889.9 1380 L1884.7 1396.5 L1888 1413.3 L1883.6 1429.8 L1885.9 1449.9 L1873.2 1443.3 L1869.2 1427.6 L1867.3 1411.9 L1867.1 1396Z"/>
<path d="M1826.7 1478.8 L1846.7 1483.7 L1867.6 1480.3 L1864.2 1497.4 L1857.1 1510.5 L1832.3 1509.7 L1830.1 1494.8Z"/>
<path d="M1440.4 1477.3 L1456.3 1485 L1473.5 1483.3 L1487.2 1488.1 L1496 1504.5 L1506.3 1520.6 L1520.9 1529.3 L1537.7 1534.3 L1549.8 1550.2 L1563.9 1550.2 L1578.1 1546.8 L1592.2 1544.8 L1606 1548.8 L1618.5 1550.1 L1618.5 1564.3 L1625 1577.8 L1625.8 1591.8 L1627.6 1605.8 L1626.7 1620.8 L1612.3 1622.8 L1598 1616.7 L1583.6 1622.4 L1569.3 1619.6 L1554.9 1623.9 L1540.5 1617.8 L1526.2 1623.5 L1511.8 1623.9 L1497.4 1619.7 L1483.1 1616.3 L1468.7 1618.9 L1454.4 1617.8 L1439.6 1620 L1444.3 1606 L1437.7 1592 L1435.7 1578 L1440.7 1564 L1440.1 1550 L1437.3 1536 L1436.2 1522 L1440.8 1508 L1437.7 1494Z"/>
<path d="M1653.1 1572 L1668.2 1574 L1682 1567.6 L1696 1562.7 L1711.1 1564.2 L1725.9 1564.2 L1739.5 1561.5 L1756.2 1561.3 L1770 1570 L1785.9 1572.4 L1804 1581.3 L1791.5 1592 L1789.4 1606.1 L1786.7 1621.3 L1772.3 1617.5 L1757.8 1617.4 L1743.4 1624.4 L1728.9 1621.1 L1714.5 1621.8 L1700 1624.1 L1685.6 1617.8 L1671.1 1616.7 L1656.6 1620 L1658.5 1604.2 L1654.8 1588.8Z"/>
<path d="M1766.6 1545.8 L1786.3 1540.7 L1809.4 1538.9 L1816.9 1565.6 L1796.5 1562.7 L1774.7 1567.7Z"/>
<path d="M1566.1 1263.6 L1583.3 1263 L1597.6 1260 L1598.2 1276.7 L1599.7 1291.2 L1572.7 1296.8 L1572.6 1281.1Z"/>
</g>
<g fill="#fff">
<path d="M1516.1 1123.9 L1527.7 1124.1 L1539.3 1124.4 L1548.4 1120.1 L1549 1131 L1552.2 1141.6 L1550.1 1152.7 L1553.3 1163 L1540.4 1168.3 L1526.4 1166.8 L1520.7 1157.6 L1525.1 1145.9 L1522.7 1135.8Z"/>
<path d="M1566.8 1180.6 L1579.7 1175.9 L1589.6 1176.4 L1588.8 1188.6 L1591.4 1201.1 L1590.2 1212 L1578 1213.9 L1564.5 1210 L1565 1200 L1568.2 1190Z"/>
<path d="M1460.7 1127.3 L1473.1 1134.2 L1489.2 1137.4 L1481.7 1147.9 L1480.3 1159.2 L1469.7 1157.5 L1460.9 1153.3 L1460.5 1141.7Z"/>
<path d="M1471.6 1516.7 L1483.5 1518 L1492.5 1524.9 L1502.5 1530 L1515.5 1533.7 L1514.4 1545.1 L1508.1 1555.4 L1505.7 1569.5 L1494.1 1563.1 L1483.3 1554.8 L1473 1553.5 L1467.8 1543 L1468.3 1533 L1470.3 1523.1Z"/>
<path d="M1540.2 1570.4 L1550.8 1569 L1561.4 1567.2 L1571.8 1562.5 L1582.6 1562.6 L1591.6 1563.5 L1592 1575.8 L1599.4 1587.4 L1596.9 1602.7 L1586.5 1597.5 L1576.9 1604.4 L1566.6 1600.7 L1556.8 1604 L1547.8 1603.1 L1547.3 1590.6 L1542.9 1578.8Z"/>
<path d="M1673.6 1589.7 L1684.3 1584.4 L1695.8 1586.8 L1707 1586.9 L1717.6 1580.7 L1729.1 1583.3 L1741.3 1579.7 L1746 1592.7 L1746.8 1607.9 L1735.4 1605.8 L1724.7 1611.7 L1713.2 1608.7 L1702.4 1612.3 L1691.4 1614.8 L1679.5 1613.4 L1675.8 1600.2Z"/>
<path d="M1860.2 1325 L1872.1 1324.8 L1887.1 1320.5 L1878.1 1331.2 L1880.5 1340.8 L1859.8 1340.7Z"/>
<path d="M1292.6 1291.4 L1305.8 1289.5 L1319.1 1288 L1328.8 1280.4 L1333.5 1291.1 L1338.1 1301.8 L1340.8 1316.1 L1327.8 1312.8 L1317.2 1318 L1304.9 1324.1 L1302.9 1313 L1299.3 1302.6Z"/>
<path d="M1373 1233.8 L1383.5 1238.4 L1393.6 1238 L1403.2 1233.2 L1415.1 1232.9 L1417.9 1244 L1421.1 1254.9 L1420.2 1269 L1410.2 1269.9 L1399.8 1265.5 L1390.2 1271.6 L1377.6 1270.5 L1381.1 1258.2 L1378.8 1247.1Z"/>
<path d="M1313.1 1224.9 L1324.4 1225.2 L1335.6 1224.8 L1349.9 1223.3 L1346.7 1233.3 L1343 1243.3 L1346.6 1252.8 L1333.3 1254.9 L1322.3 1256.2 L1317.4 1246.8 L1313.8 1237.1Z"/>
<path d="M1240.4 1410.2 L1251 1404.7 L1262.5 1407 L1275.3 1403 L1275.1 1416.6 L1276.9 1431.8 L1265.5 1430.8 L1254.8 1435.6 L1242.6 1433.4 L1240.2 1420.2Z"/>
<path d="M1547 1079.3 L1557.6 1073.3 L1569.3 1078 L1580 1073.3 L1581.9 1084.4 L1581.3 1095.7 L1583 1109.3 L1573 1108 L1563.2 1105.1 L1551.2 1103.8 L1551.3 1089.7Z"/>
<path d="M1560 1126.6 L1571.2 1126.9 L1582.3 1125.4 L1591.7 1123.5 L1591.2 1133.7 L1593.6 1143.5 L1596.7 1156 L1586.7 1155.5 L1576.7 1153.7 L1565.8 1153.5 L1566.9 1139.1Z"/>
<path d="M1453.3 1166.2 L1463.3 1172.9 L1471.5 1169.8 L1476 1182.6 L1470.7 1194.4 L1469.5 1208.7 L1459.7 1203 L1458.4 1191.9 L1452.9 1181.3Z"/>
<path d="M549.8 441.2 L561.9 439 L574.6 442.4 L588.7 440.2 L584.6 452.1 L587.2 464.7 L583.7 472.9 L573.5 474.2 L563.1 476.1 L549.8 473.7 L554.9 463 L554.3 453Z"/>
<path d="M627.1 429.8 L639.7 422.6 L656.4 423.3 L656.4 435.5 L651.3 447.8 L653.3 457.1 L643.3 456.1 L634.7 459.7 L632.2 448.7 L630.4 437.5Z"/>
<path d="M493.6 479.3 L504.5 476.4 L515.7 476.2 L530.6 473.3 L525.5 486.6 L526.7 498.1 L516.7 500.2 L506.7 500.1 L494.7 500.3 L494.3 488.5Z"/>
</g>
<g fill="#e4e6df" filter="url(#bl)">
<ellipse cx="190" cy="477" rx="26" ry="22"/>
<ellipse cx="167" cy="713" rx="18" ry="12"/>
<ellipse cx="540" cy="830" rx="26" ry="32"/>
<ellipse cx="333" cy="687" rx="9" ry="8"/>
<ellipse cx="603" cy="550" rx="13" ry="12"/>
<ellipse cx="183" cy="890" rx="12" ry="10"/>
<ellipse cx="921" cy="635" rx="17" ry="18"/>
<ellipse cx="845" cy="445" rx="6" ry="12"/>
<ellipse cx="855" cy="740" rx="8" ry="12"/>
<ellipse cx="755" cy="815" rx="14" ry="10"/>
<ellipse cx="83" cy="1237" rx="58" ry="46"/>
<ellipse cx="333" cy="1175" rx="8" ry="8"/>
<ellipse cx="390" cy="1410" rx="18" ry="28"/>
<ellipse cx="190" cy="1455" rx="14" ry="10"/>
<ellipse cx="300" cy="1553" rx="10" ry="8"/>
<ellipse cx="70" cy="1013" rx="8" ry="7"/>
<ellipse cx="1250" cy="1140" rx="9" ry="9"/>
<ellipse cx="1227" cy="1203" rx="13" ry="10"/>
<ellipse cx="1293" cy="1275" rx="20" ry="14"/>
<ellipse cx="1397" cy="1370" rx="10" ry="9"/>
<ellipse cx="1243" cy="1478" rx="9" ry="8"/>
<ellipse cx="1180" cy="1532" rx="12" ry="16"/>
<ellipse cx="1510" cy="1425" rx="10" ry="10"/>
<ellipse cx="1862" cy="1320" rx="26" ry="24"/>
<ellipse cx="1330" cy="1455" rx="7" ry="7"/>
<ellipse cx="1360" cy="1545" rx="14" ry="12"/>
<ellipse cx="840" cy="1525" rx="22" ry="16"/>
<ellipse cx="545" cy="1375" rx="9" ry="8"/>
<ellipse cx="536" cy="1567" rx="10" ry="8"/>
<ellipse cx="882" cy="1195" rx="46" ry="38"/>
<ellipse cx="660" cy="397" rx="7" ry="18"/>
</g>
<g fill="#d4e6f0">
<path d="M1090 351.7 C1090.8 358.1 1093.0 369.7 1095 383.3 C1097.0 396.9 1099.8 416.6 1101.7 433.3 C1103.7 450.0 1104.2 468.3 1106.7 483.3 C1109.2 498.3 1113.9 510.0 1116.7 523.3 C1119.5 536.6 1119.4 551.1 1123.3 563.3 C1127.2 575.5 1133.9 586.1 1140 596.7 C1146.1 607.3 1154.2 617.8 1160 626.7 C1165.8 635.6 1172.8 642.2 1175 650 C1177.2 657.8 1175.2 668.8 1173.3 673.3 C1171.3 677.8 1167.7 678.4 1163.3 676.7 C1158.9 675.0 1151.7 665.8 1146.7 663.3 C1141.7 660.8 1137.8 661.4 1133.3 661.7 C1128.8 662.0 1124.9 664.1 1120 665 C1115.1 665.9 1110.5 668.0 1104 667 C1097.5 666.0 1088.5 661.8 1081 659 C1073.5 656.2 1064.2 651.7 1059 650 C1053.8 648.3 1053.2 648.7 1050 649 C1046.8 649.3 1043.2 650.3 1040 652 C1036.8 653.7 1034.5 656.8 1031 659 C1027.5 661.2 1023.7 662.7 1019 665 C1014.3 667.3 1007.3 672.2 1003 673 C998.7 673.8 997.2 671.8 993 670 C988.8 668.2 981.8 664.8 978 662 C974.2 659.2 973.0 654.7 970 653 C967.0 651.3 964.2 651.7 960 652 C955.8 652.3 950.0 654.0 945 655 C940.0 656.0 934.0 657.0 930 658 C926.0 659.0 923.2 659.8 921 661 C918.8 662.2 918.8 663.5 917 665 C915.2 666.5 912.2 668.0 910 670 C907.8 672.0 905.3 674.7 904 677 C902.7 679.3 904.0 681.5 902 684 C900.0 686.5 895.2 690.0 892 692 C888.8 694.0 886.0 694.0 883 696 C880.0 698.0 876.5 702.2 874 704 C871.5 705.8 869.5 707.5 868 707 C866.5 706.5 866.5 703.0 865 701 C863.5 699.0 861.5 696.8 859 695 C856.5 693.2 853.2 690.0 850 690 C846.8 690.0 843.3 693.7 840 695 C836.7 696.3 832.2 696.5 830 698 C827.8 699.5 829.5 702.0 827 704 C824.5 706.0 818.8 708.0 815 710 C811.2 712.0 806.8 713.0 804 716 C801.2 719.0 801.7 723.5 798 728 C794.3 732.5 787.7 739.3 782 743 C776.3 746.7 769.8 747.0 764 750 C758.2 753.0 753.7 757.3 747 761 C740.3 764.7 729.2 767.8 724 772 C718.8 776.2 720.3 782.0 716 786 C711.7 790.0 705.5 793.2 698 796 C690.5 798.8 679.5 801.8 671 803 C662.5 804.2 654.8 801.8 647 803 C639.2 804.2 633.0 808.8 624 810 C615.0 811.2 603.7 808.7 593 810 C582.3 811.3 568.5 815.0 560 818 C551.5 821.0 545.0 825.5 542 828 C539.0 830.5 540.8 831.8 542 833 C543.2 834.2 544.5 835.7 549 835 C553.5 834.3 561.7 830.8 569 829 C576.3 827.2 584.5 824.8 593 824 C601.5 823.2 611.5 825.0 620 824 C628.5 823.0 635.5 819.5 644 818 C652.5 816.5 662.8 816.2 671 815 C679.2 813.8 685.5 812.0 693 811 C700.5 810.0 709.7 810.8 716 809 C722.3 807.2 725.8 801.8 731 800 C736.2 798.2 742.2 799.2 747 798 C751.8 796.8 756.0 796.0 760 793 C764.0 790.0 766.5 784.5 771 780 C775.5 775.5 782.2 769.3 787 766 C791.8 762.7 796.3 761.5 800 760 C803.7 758.5 806.3 758.7 809 757 C811.7 755.3 813.8 753.0 816 750 C818.2 747.0 819.7 742.8 822 739 C824.3 735.2 827.5 730.7 830 727 C832.5 723.3 834.3 719.0 837 717 C839.7 715.0 843.3 714.8 846 715 C848.7 715.2 850.3 716.7 853 718.5 C855.7 720.3 859.0 724.6 862 726 C865.0 727.4 868.0 727.8 871 727 C874.0 726.2 877.0 723.2 880 721.5 C883.0 719.8 885.5 718.9 889 717 C892.5 715.1 897.5 712.7 901 710 C904.5 707.3 908.0 704.5 910 701 C912.0 697.5 912.0 693.0 913 689 C914.0 685.0 915.1 680.5 916 677 C916.9 673.5 917.3 669.7 918.5 668 C919.7 666.3 921.2 666.7 923 667 C924.8 667.3 927.3 669.1 929 670 C930.7 670.9 930.8 671.9 933 672.6 C935.2 673.3 939.2 673.3 942 674 C944.8 674.7 947.5 676.0 950 677 C952.5 678.0 954.8 679.3 957 680 C959.2 680.7 960.3 681.0 963 681 C965.7 681.0 970.3 679.2 973 680 C975.7 680.8 976.7 683.5 979 686 C981.3 688.5 984.5 692.0 987 695 C989.5 698.0 992.1 701.1 994 704 C995.9 706.9 996.5 709.7 998.5 712.6 C1000.5 715.5 1004.1 719.3 1006 721.5 C1007.9 723.7 1007.2 724.6 1010 726 C1012.8 727.4 1010.4 735.4 1022.5 730 C1034.6 724.6 1069.6 699.8 1082.5 693.8 C1095.4 687.8 1094.6 692.3 1100 693.8 C1105.4 695.2 1109.2 702.1 1115 702.5 C1120.8 702.9 1129.6 698.9 1135 696.2 C1140.4 693.5 1139.0 688.1 1147.5 686.2 C1156.0 684.3 1177.0 682.3 1186.2 685 C1195.4 687.7 1197.7 687.9 1202.5 702.5 C1207.3 717.1 1215.8 760.0 1215 772.5 C1214.2 785.0 1200.0 775.0 1197.5 777.5 C1195.0 780.0 1197.9 783.3 1200 787.5 C1202.1 791.7 1208.3 797.1 1210 802.5 C1211.7 807.9 1211.2 815.0 1210 820 C1208.8 825.0 1205.8 826.7 1202.5 832.5 C1199.2 838.3 1197.5 847.5 1190 855 C1182.5 862.5 1164.2 871.7 1157.5 877.5 C1150.8 883.3 1153.3 885.4 1150 890 C1146.7 894.6 1142.1 899.6 1137.5 905 C1132.9 910.4 1126.2 918.3 1122.5 922.5 C1118.8 926.7 1118.8 927.9 1115 930 C1111.2 932.1 1105.4 931.7 1100 935 C1094.6 938.3 1087.1 946.2 1082.5 950 C1077.9 953.8 1074.6 954.2 1072.5 957.5 C1070.4 960.8 1070.8 964.2 1070 970 C1069.2 975.8 1069.6 986.9 1067.5 992.5 C1065.4 998.1 1059.2 1001.9 1057.5 1003.8 C1055.8 1005.7 1059.2 1001.9 1057.5 1003.8 C1055.8 1005.7 1050.0 1010.2 1047.5 1015 C1045.0 1019.8 1042.5 1025.8 1042.5 1032.5 C1042.5 1039.2 1045.8 1046.7 1047.5 1055 C1049.2 1063.3 1050.8 1072.1 1052.5 1082.5 C1054.2 1092.9 1057.9 1106.2 1057.5 1117.5 C1057.1 1128.8 1052.1 1140.4 1050 1150 C1047.9 1159.6 1045.6 1169.6 1045 1175 C1044.4 1180.4 1045.0 1181.2 1046.2 1182.5 C1047.5 1183.8 1048.5 1181.2 1052.5 1182.5 C1056.5 1183.8 1065.0 1187.9 1070 1190 C1075.0 1192.1 1078.3 1193.8 1082.5 1195 C1086.7 1196.2 1090.2 1197.7 1095 1197.5 C1099.8 1197.3 1106.2 1194.6 1111.2 1193.8 C1116.2 1193.0 1120.6 1193.3 1125 1192.5 C1129.4 1191.7 1137.5 1189.8 1137.5 1188.8 C1137.5 1187.8 1131.2 1186.8 1125 1186.2 C1118.8 1185.6 1107.1 1185.6 1100 1185 C1092.9 1184.4 1088.8 1184.6 1082.5 1182.5 C1076.2 1180.4 1067.9 1174.6 1062.5 1172.5 C1057.1 1170.4 1050.4 1171.7 1050 1170 C1049.6 1168.3 1057.1 1166.7 1060 1162.5 C1062.9 1158.3 1066.7 1151.2 1067.5 1145 C1068.3 1138.8 1065.8 1132.5 1065 1125 C1064.2 1117.5 1063.3 1108.3 1062.5 1100 C1061.7 1091.7 1060.0 1083.3 1060 1075 C1060.0 1066.7 1060.4 1057.5 1062.5 1050 C1064.6 1042.5 1068.8 1036.2 1072.5 1030 C1076.2 1023.8 1083.3 1017.5 1085 1012.5 C1086.7 1007.5 1084.6 998.8 1082.5 1000 C1080.4 1001.2 1071.2 1021.7 1072.5 1020 C1073.8 1018.3 1083.8 999.6 1090 990 C1096.2 980.4 1102.9 972.1 1110 962.5 C1117.1 952.9 1126.2 941.2 1132.5 932.5 C1138.8 923.8 1144.6 917.1 1147.5 910 C1150.4 902.9 1149.6 893.0 1150 890 C1150.4 887.0 1147.2 890.0 1150 891.7 C1152.8 893.4 1161.2 896.4 1166.7 900 C1172.2 903.6 1178.9 908.8 1183.3 913.3 C1187.7 917.8 1191.1 921.1 1193.3 926.7 C1195.5 932.3 1195.6 939.5 1196.7 946.7 C1197.8 953.9 1197.2 961.1 1200 970 C1202.8 978.9 1207.8 990.5 1213.3 1000 C1218.8 1009.5 1225.5 1018.4 1233.3 1026.7 C1241.1 1035.0 1250.0 1042.8 1260 1050 C1270.0 1057.2 1281.1 1064.5 1293.3 1070 C1305.5 1075.5 1318.3 1080.0 1333.3 1083.3 C1348.3 1086.6 1366.6 1089.2 1383.3 1090 C1400.0 1090.8 1416.6 1090.0 1433.3 1088.3 C1450.0 1086.6 1469.4 1083.0 1483.3 1080 C1497.2 1077.0 1507.2 1073.3 1516.7 1070 C1526.2 1066.7 1530.6 1062.5 1540 1060 C1549.4 1057.5 1562.8 1056.4 1573.3 1055 C1583.8 1053.6 1590.5 1052.5 1603.3 1051.7 C1616.1 1050.9 1625.5 1045.3 1650 1050 C1674.5 1054.7 1720.0 1063.3 1750 1080 C1780.0 1096.7 1808.3 1125.0 1830 1150 C1851.7 1175.0 1867.8 1205.0 1880 1230 C1892.2 1255.0 1899.1 1288.3 1903 1300 C1906.9 1311.7 1904.3 1297.8 1903.3 1300 C1902.2 1302.2 1898.4 1305.5 1896.7 1313.3 C1895.0 1321.1 1894.4 1335.6 1893.3 1346.7 C1892.2 1357.8 1891.1 1368.9 1890 1380 C1888.9 1391.1 1887.8 1402.2 1886.7 1413.3 C1885.6 1424.4 1886.1 1435.6 1883.3 1446.7 C1880.5 1457.8 1875.0 1469.5 1870 1480 C1865.0 1490.5 1858.3 1500.0 1853.3 1510 C1848.3 1520.0 1846.1 1531.1 1840 1540 C1833.9 1548.9 1823.9 1555.0 1816.7 1563.3 C1809.5 1571.6 1801.7 1580.3 1796.7 1590 C1791.7 1599.7 1725.3 1615.9 1786.7 1621.7 C1848.1 1627.5 2101.9 1837.8 2165 1625 C2228.1 1412.2 2344.2 558.3 2165 345 C1985.8 131.7 1269.2 343.9 1090 345 C910.8 346.1 1089.2 345.3 1090 351.7Z"/>
<path d="M1253.3 1621.7 C1228.3 1615.9 1250.0 1594.8 1253.3 1586.7 C1256.6 1578.6 1264.4 1575.5 1273.3 1573.3 C1282.2 1571.1 1296.1 1572.2 1306.7 1573.3 C1317.3 1574.4 1328.9 1576.7 1336.7 1580 C1344.5 1583.3 1347.2 1591.6 1353.3 1593.3 C1359.4 1595.0 1367.7 1588.3 1373.3 1590 C1378.9 1591.7 1381.7 1598.0 1386.7 1603.3 C1391.7 1608.6 1425.5 1618.6 1403.3 1621.7 C1381.1 1624.8 1278.3 1627.5 1253.3 1621.7Z"/>
<ellipse cx="697" cy="473" rx="17" ry="11" transform="rotate(25 697 473)"/>
<ellipse cx="617" cy="468" rx="5" ry="5" transform="rotate(0 617 468)"/>
<ellipse cx="353" cy="927" rx="6" ry="9" transform="rotate(10 353 927)"/>
<ellipse cx="293" cy="997" rx="2.5" ry="9" transform="rotate(5 293 997)"/>
<ellipse cx="229" cy="1057" rx="4" ry="11" transform="rotate(20 229 1057)"/>
<ellipse cx="120" cy="1163" rx="3.5" ry="6" transform="rotate(15 120 1163)"/>
<ellipse cx="178" cy="1137" rx="3" ry="2" transform="rotate(0 178 1137)"/>
<ellipse cx="93" cy="1230" rx="4" ry="13" transform="rotate(8 93 1230)"/>
<ellipse cx="77" cy="1270" rx="5" ry="15" transform="rotate(5 77 1270)"/>
<ellipse cx="1073" cy="1283" rx="5" ry="2.5" transform="rotate(-25 1073 1283)"/>
<ellipse cx="1283" cy="1228" rx="1.5" ry="7" transform="rotate(-15 1283 1228)"/>
<ellipse cx="1540" cy="1255" rx="2" ry="7" transform="rotate(0 1540 1255)"/>
<ellipse cx="1340" cy="1350" rx="2" ry="6" transform="rotate(-20 1340 1350)"/>
<ellipse cx="1267" cy="1337" rx="5" ry="2.5" transform="rotate(30 1267 1337)"/>
<path d="M300 1090 C301.1 1086.1 306.1 1078.3 313.3 1073.3 C320.5 1068.3 333.3 1064.4 343.3 1060 C353.3 1055.6 363.9 1052.2 373.3 1046.7 C382.8 1041.2 391.1 1033.4 400 1026.7 C408.9 1020.0 420.6 1010.0 426.7 1006.7 C432.8 1003.4 436.1 1005.0 436.7 1006.7 C437.2 1008.4 435.6 1011.2 430 1016.7 C424.4 1022.2 412.2 1032.8 403.3 1040 C394.4 1047.2 385.6 1055.0 376.7 1060 C367.8 1065.0 359.4 1066.7 350 1070 C340.6 1073.3 327.2 1075.5 320 1080 C312.8 1084.5 310.0 1095.0 306.7 1096.7 C303.4 1098.4 298.9 1093.9 300 1090Z"/>
<path d="M560 930 C562.2 927.5 577.2 924.7 586.7 923.3 C596.2 921.9 607.8 922.8 616.7 921.7 C625.6 920.6 635.0 916.7 640 916.7 C645.0 916.7 647.8 919.2 646.7 921.7 C645.6 924.2 640.0 928.9 633.3 931.7 C626.6 934.5 616.7 937.2 606.7 938.3 C596.7 939.4 581.1 939.7 573.3 938.3 C565.5 936.9 557.8 932.5 560 930Z"/>
<path d="M0 993.3 C3.3 981.1 15.0 988.9 20 990 C25.0 991.1 29.2 992.8 30 1000 C30.8 1007.2 26.7 1023.3 25 1033.3 C23.3 1043.3 24.2 1055.0 20 1060 C15.8 1065.0 3.3 1074.4 0 1063.3 C-3.3 1052.2 -3.3 1005.5 0 993.3Z"/>
<path d="M293.3 1463.3 C298.3 1461.6 312.2 1460.5 313.3 1463.3 C314.4 1466.1 303.3 1472.8 300 1480 C296.7 1487.2 293.3 1498.4 293.3 1506.7 C293.3 1515.0 295.6 1523.9 300 1530 C304.4 1536.1 308.9 1542.2 320 1543.3 C331.1 1544.4 355.6 1537.5 366.7 1536.7 C377.8 1535.9 386.7 1536.9 386.7 1538.3 C386.7 1539.7 378.4 1542.5 366.7 1545 C355.0 1547.5 329.5 1553.0 316.7 1553.3 C303.9 1553.6 296.7 1551.7 290 1546.7 C283.3 1541.7 279.2 1531.6 276.7 1523.3 C274.2 1515.0 273.9 1505.0 275 1496.7 C276.1 1488.4 280.2 1478.9 283.3 1473.3 C286.4 1467.7 288.3 1465.0 293.3 1463.3Z"/>
<path d="M0 1373.3 C2.8 1364.4 11.7 1363.8 16.7 1363.3 C21.7 1362.8 28.9 1365.5 30 1370 C31.1 1374.5 26.6 1383.3 23.3 1390 C20.0 1396.7 13.9 1405.5 10 1410 C6.1 1414.5 1.7 1422.8 0 1416.7 C-1.7 1410.6 -2.8 1382.2 0 1373.3Z"/>
<path d="M40 1338.3 C41.1 1336.1 48.8 1332.5 53.3 1333.3 C57.8 1334.1 61.1 1341.1 66.7 1343.3 C72.3 1345.5 81.7 1345.0 86.7 1346.7 C91.7 1348.4 97.3 1351.4 96.7 1353.3 C96.1 1355.2 88.3 1358.6 83.3 1358.3 C78.3 1358.0 72.8 1353.6 66.7 1351.7 C60.6 1349.8 51.2 1348.9 46.7 1346.7 C42.2 1344.5 38.9 1340.5 40 1338.3Z"/>
<path d="M0 1546.7 C1.7 1545.3 8.3 1546.6 10 1548.3 C11.7 1550.0 11.7 1555.3 10 1556.7 C8.3 1558.1 1.7 1558.4 0 1556.7 C-1.7 1555.0 -1.7 1548.1 0 1546.7Z"/>
<path d="M0 860 C0.0 860.0 0.0 860.0 0 860 C0.0 860.0 0.0 860.0 0 860 C0.0 860.0 0.0 860.0 0 860Z"/>
<path d="M720 815 C720.0 815.0 720.0 794.2 720 790 C720.0 785.8 720.0 785.8 720 790 C720.0 794.2 720.0 815.0 720 815Z"/>
<path d="M875 1207.5 C875.0 1206.7 880.8 1204.7 885 1203.8 C889.2 1202.9 895.4 1201.8 900 1202 C904.6 1202.2 908.3 1203.2 912.5 1205 C916.7 1206.8 922.1 1210.0 925 1212.5 C927.9 1215.0 931.2 1219.6 930 1220 C928.8 1220.4 922.5 1216.7 917.5 1215 C912.5 1213.3 905.4 1211.0 900 1210 C894.6 1209.0 889.2 1209.2 885 1208.8 C880.8 1208.4 875.0 1208.3 875 1207.5Z"/>
<path d="M1253.3 1586.7 C1253.3 1586.7 1253.3 1586.7 1253.3 1586.7 C1253.3 1586.7 1253.3 1586.7 1253.3 1586.7 C1253.3 1586.7 1253.3 1586.7 1253.3 1586.7Z"/>
</g>
<g fill="#fff">
<path d="M1045 666 C1045.7 664.8 1048.8 663.7 1052 665 C1055.2 666.3 1063.3 671.8 1064 674 C1064.7 676.2 1058.7 678.3 1056 678 C1053.3 677.7 1049.8 674.0 1048 672 C1046.2 670.0 1044.3 667.2 1045 666Z"/>
<path d="M1102 676 C1102.7 675.2 1109.5 675.3 1112 676 C1114.5 676.7 1117.7 679.2 1117 680 C1116.3 680.8 1110.5 681.7 1108 681 C1105.5 680.3 1101.3 676.8 1102 676Z"/>
</g>
<path d="M1022.5 730 L1082.5 693.8 L1100 693.8 L1115 702.5 L1135 696.2 L1147.5 686.2 L1186.2 685 L1202.5 702.5 L1215 772.5 L1197.5 777.5 L1200 787.5 L1210 802.5 L1210 820 L1202.5 832.5 L1190 855 L1157.5 877.5 L1150 890 L1137.5 905 L1122.5 922.5 L1115 930 L1100 935 L1082.5 950 L1072.5 957.5 L1070 970 L1067.5 992.5 L1057.5 1003.8 L1057.5 1003.8 L1047.5 1015 L1042.5 1032.5 L1047.5 1055 L1052.5 1082.5 L1057.5 1117.5 L1050 1150 L1045 1175 L1046.2 1182.5" fill="none" stroke="#d4e6f0" stroke-width="9" stroke-linejoin="round"/>
<g fill="none" stroke-linecap="round" stroke-linejoin="round">
<g stroke="#d8d8d8" stroke-width="2.05">
<path d="M0 426.7 C3.9 427.8 13.3 425.0 23.3 433.3 C33.3 441.6 45.5 466.7 60 476.7 C74.5 486.7 93.9 491.1 110 493.3 C126.1 495.5 145.0 492.8 156.7 490 C168.4 487.2 176.1 478.9 180 476.7"/>
<path d="M0 506.7 C5.5 504.5 23.3 498.3 33.3 493.3 C43.3 488.3 55.5 479.5 60 476.7"/>
<path d="M0 563.3 C6.7 562.2 26.7 553.4 40 556.7 C53.3 560.0 64.5 576.1 80 583.3 C95.5 590.5 119.4 598.0 133.3 600 C147.2 602.0 152.2 602.2 163.3 595 C174.4 587.8 194.4 571.4 200 556.7 C205.6 542.0 200.0 520.0 196.7 506.7 C193.4 493.4 182.8 481.7 180 476.7"/>
<path d="M80 583.3 C85.0 577.2 99.5 558.9 110 546.7 C120.5 534.5 137.2 518.9 143.3 510 C149.4 501.1 146.1 496.1 146.7 493.3"/>
<path d="M163.3 595 C172.8 598.0 204.4 605.2 220 613.3 C235.6 621.3 243.4 638.3 256.7 643.3 C270.0 648.3 292.8 643.3 300 643.3"/>
<path d="M0 610 C7.2 612.8 26.6 622.2 43.3 626.7 C60.0 631.2 77.8 633.4 100 636.7 C122.2 640.0 162.2 647.8 176.7 646.7 C191.1 645.6 179.5 634.5 186.7 630 C193.9 625.5 214.4 621.7 220 620"/>
<path d="M43.3 626.7 C39.4 633.9 25.0 660.6 20 670 C15.0 679.4 16.6 680.5 13.3 683.3 C10.0 686.1 2.2 686.1 0 686.7"/>
<path d="M0 720 C11.1 718.3 42.8 713.3 66.7 710 C90.6 706.7 125.5 702.2 143.3 700 C161.1 697.8 158.9 694.5 173.3 696.7 C187.8 698.9 208.9 712.2 230 713.3 C251.1 714.4 282.8 702.7 300 703.3 C317.2 703.9 321.1 710.6 333.3 716.7 C345.5 722.8 366.6 736.1 373.3 740"/>
<path d="M173.3 696.7 C172.8 688.4 169.4 655.0 170 646.7 C170.6 638.4 175.6 646.7 176.7 646.7"/>
<path d="M173.3 696.7 C172.2 708.4 171.1 743.9 166.7 766.7 C162.3 789.5 152.3 812.8 146.7 833.3 C141.1 853.8 135.5 880.5 133.3 890"/>
<path d="M0 743.3 C8.3 744.4 33.3 743.9 50 750 C66.7 756.1 97.2 767.8 100 780 C102.8 792.2 77.8 805.0 66.7 823.3 C55.6 841.6 38.9 878.9 33.3 890"/>
<path d="M230 713.3 C232.8 718.9 233.4 733.9 246.7 746.7 C260.0 759.5 292.2 782.8 310 790 C327.8 797.2 341.1 787.5 353.3 790 C365.5 792.5 370.5 802.2 383.3 805 C396.1 807.8 416.1 807.5 430 806.7 C443.9 805.9 460.6 801.1 466.7 800"/>
<path d="M310 790 C311.7 798.9 318.3 826.6 320 843.3 C321.7 860.0 320.0 882.2 320 890"/>
<path d="M256.7 643.3 C261.1 650.0 276.1 673.3 283.3 683.3 C290.5 693.3 297.2 700.0 300 703.3"/>
<path d="M286.7 590 C291.7 588.3 306.1 581.7 316.7 580 C327.2 578.3 338.9 580.0 350 580 C361.1 580.0 369.4 580.5 383.3 580 C397.2 579.5 416.6 576.7 433.3 576.7 C450.0 576.7 469.4 579.5 483.3 580 C497.2 580.5 504.5 579.5 516.7 580 C528.9 580.5 550.0 582.8 556.7 583.3"/>
<path d="M383.3 580 C380.5 583.9 370.6 594.4 366.7 603.3 C362.8 612.2 363.3 622.7 360 633.3 C356.7 643.9 347.8 655.0 346.7 666.7 C345.6 678.4 352.2 697.2 353.3 703.3"/>
<path d="M383.3 580 C385.5 587.2 388.9 608.3 396.7 623.3 C404.5 638.3 423.9 660.0 430 670 C436.1 680.0 432.8 681.1 433.3 683.3"/>
<path d="M333.3 490 C336.1 495.6 341.7 508.3 350 523.3 C358.3 538.3 377.8 570.5 383.3 580"/>
<path d="M480 503.3 C481.1 513.3 486.7 546.6 486.7 563.3 C486.7 580.0 482.8 586.6 480 603.3 C477.2 620.0 470.0 652.2 470 663.3 C470.0 674.4 478.9 658.3 480 670 C481.1 681.7 476.7 711.6 476.7 733.3 C476.7 755.0 479.4 788.9 480 800"/>
<path d="M450 473.3 L480 503.3"/>
<path d="M393.3 516.7 C397.2 517.2 407.2 520.0 416.7 520 C426.1 520.0 436.1 514.5 450 516.7 C463.9 518.9 483.3 529.4 500 533.3 C516.7 537.2 535.5 539.4 550 540 C564.5 540.6 576.7 536.7 586.7 536.7 C596.7 536.7 606.1 539.5 610 540"/>
<path d="M550 383.3 C550.5 391.6 551.1 417.7 553.3 433.3 C555.5 448.9 562.7 459.5 563.3 476.7 C563.9 493.9 557.2 518.9 556.7 536.7 C556.2 554.5 558.3 564.4 560 583.3 C561.7 602.2 565.6 626.1 566.7 650 C567.8 673.9 566.7 713.9 566.7 726.7"/>
<path d="M466.7 436.7 C475.0 434.5 502.8 427.8 516.7 423.3 C530.6 418.9 534.5 412.8 550 410 C565.5 407.2 594.5 407.2 610 406.7 C625.5 406.1 637.8 406.7 643.3 406.7"/>
<path d="M493.3 656.7 C505.5 655.6 546.1 651.7 566.7 650 C587.3 648.3 600.0 649.5 616.7 646.7 C633.4 643.9 652.8 636.6 666.7 633.3 C680.6 630.0 691.1 628.4 700 626.7 C708.9 625.0 716.7 623.9 720 623.3"/>
<path d="M506.7 580 C505.6 587.8 502.2 613.9 500 626.7 C497.8 639.5 497.8 647.3 493.3 656.7 C488.9 666.1 476.1 670.5 473.3 683.3 C470.5 696.1 476.1 725.0 476.7 733.3"/>
<path d="M433.3 683.3 C441.6 680.5 465.5 671.1 483.3 666.7 C501.1 662.3 531.7 651.2 540 656.7 C548.3 662.2 537.8 690.0 533.3 700 C528.8 710.0 530.5 710.0 513.3 716.7 C496.1 723.4 443.9 736.1 430 740"/>
<path d="M430 670 C430.6 682.2 430.0 724.4 433.3 743.3 C436.6 762.2 447.2 776.6 450 783.3"/>
<path d="M540 793.3 C547.8 785.5 568.4 766.1 586.7 746.7 C605.0 727.3 631.7 696.7 650 676.7 C668.3 656.7 685.0 638.4 696.7 626.7 C708.4 615.0 716.1 610.0 720 606.7"/>
<path d="M640 580 C644.5 583.9 657.2 595.5 666.7 603.3 C676.2 611.1 689.5 618.9 696.7 626.7 C703.9 634.5 706.1 645.0 710 650 C713.9 655.0 718.3 655.6 720 656.7"/>
<path d="M643.3 406.7 C642.8 412.8 636.7 430.5 640 443.3 C643.3 456.1 653.3 470.0 663.3 483.3 C673.3 496.6 690.5 514.4 700 523.3 C709.5 532.2 716.7 534.5 720 536.7"/>
<path d="M643.3 406.7 C650.0 404.5 670.5 399.4 683.3 393.3 C696.1 387.2 713.9 373.9 720 370"/>
<path d="M280 355 C279.4 364.7 284.5 400.8 276.7 413.3 C268.9 425.8 244.4 423.3 233.3 430 C222.2 436.7 213.9 449.4 210 453.3"/>
<path d="M300 363.3 C301.1 373.3 304.5 405.0 306.7 423.3 C308.9 441.6 312.2 465.0 313.3 473.3"/>
<path d="M230 490 C236.1 487.2 252.8 476.1 266.7 473.3 C280.6 470.5 302.2 470.5 313.3 473.3 C324.4 476.1 330.0 487.2 333.3 490"/>
<path d="M423.3 363.3 C420.5 371.1 417.2 393.9 406.7 410 C396.1 426.1 367.8 451.7 360 460"/>
<path d="M410 376.7 C415.6 382.2 433.9 400.0 443.3 410 C452.8 420.0 462.8 432.2 466.7 436.7"/>
<path d="M0 393.3 C3.3 397.2 16.1 410.0 20 416.7 C23.9 423.4 22.8 430.5 23.3 433.3"/>
<path d="M93.3 355 C94.4 359.7 104.4 373.0 100 383.3 C95.6 393.6 73.4 401.1 66.7 416.7 C60.0 432.3 61.1 466.7 60 476.7"/>
<path d="M206.7 355 C207.2 361.9 214.4 382.0 210 396.7 C205.6 411.4 185.0 435.5 180 443.3"/>
<path d="M143.3 510 C148.3 511.7 163.9 518.9 173.3 520 C182.8 521.1 195.6 517.2 200 516.7"/>
<path d="M390 763.3 C390.6 772.2 390.0 802.2 393.3 816.7 C396.6 831.2 405.6 837.8 410 850 C414.4 862.2 418.3 883.3 420 890"/>
<path d="M373.3 740 C376.1 742.8 380.6 752.2 390 756.7 C399.4 761.2 423.3 765.0 430 766.7"/>
<path d="M533.3 843.3 C541.6 842.8 566.6 838.9 583.3 840 C600.0 841.1 610.5 849.5 633.3 850 C656.1 850.5 705.5 844.4 720 843.3"/>
<path d="M546.7 863.3 L600 890"/>
<path d="M133.3 890 C141.1 887.8 163.3 879.5 180 876.7 C196.7 873.9 213.3 872.8 233.3 873.3 C253.3 873.8 277.8 877.2 300 880 C322.2 882.8 355.6 888.3 366.7 890"/>
<path d="M586.7 746.7 L566.7 726.7"/>
<path d="M196.7 506.7 L200 556.7"/>
<path d="M786.7 355 C786.1 361.4 783.3 380.8 783.3 393.3 C783.3 405.8 788.4 416.1 786.7 430 C785.0 443.9 778.3 461.1 773.3 476.7 C768.3 492.2 760.0 511.1 756.7 523.3 C753.4 535.5 751.6 542.2 753.3 550 C755.0 557.8 759.5 563.3 766.7 570 C773.9 576.7 786.7 581.1 796.7 590 C806.7 598.9 815.0 615.0 826.7 623.3 C838.4 631.6 854.5 635.5 866.7 640 C878.9 644.5 894.5 648.3 900 650"/>
<path d="M640 406.7 C644.5 407.2 656.7 406.1 666.7 410 C676.7 413.9 690.6 426.1 700 430 C709.4 433.9 709.4 433.3 723.3 433.3 C737.2 433.3 766.1 431.1 783.3 430 C800.5 428.9 819.5 427.2 826.7 426.7"/>
<path d="M833.3 355 C836.6 359.7 845.5 375.8 853.3 383.3 C861.1 390.8 869.4 395.6 880 400 C890.6 404.4 907.8 407.2 916.7 410 C925.6 412.8 930.0 408.4 933.3 416.7 C936.6 425.0 937.2 450.0 936.7 460 C936.2 470.0 936.1 468.9 930 476.7 C923.9 484.5 905.5 498.9 900 506.7 C894.5 514.5 897.2 520.5 896.7 523.3"/>
<path d="M850 510 C857.8 512.2 881.7 517.2 896.7 523.3 C911.7 529.4 924.5 541.7 940 546.7 C955.5 551.7 967.8 550.5 990 553.3 C1012.2 556.1 1051.1 560.5 1073.3 563.3 C1095.5 566.1 1115.0 568.9 1123.3 570"/>
<path d="M930 476.7 C937.2 476.1 956.1 471.6 973.3 473.3 C990.5 475.0 1016.6 487.8 1033.3 486.7 C1050.0 485.6 1061.6 470.6 1073.3 466.7 C1085.0 462.8 1098.3 463.9 1103.3 463.3"/>
<path d="M1033.3 486.7 C1032.8 491.7 1037.8 509.5 1030 516.7 C1022.2 523.9 1000.0 526.7 986.7 530 C973.4 533.3 957.2 533.9 950 536.7 C942.8 539.5 944.4 545.0 943.3 546.7"/>
<path d="M986.7 530 L986.7 553.3"/>
<path d="M923.3 656.7 C926.1 651.7 931.7 635.6 940 626.7 C948.3 617.8 962.2 609.4 973.3 603.3 C984.4 597.2 992.8 592.8 1006.7 590 C1020.6 587.2 1044.5 589.5 1056.7 586.7 C1068.9 583.9 1068.9 576.1 1080 573.3 C1091.1 570.5 1116.1 570.5 1123.3 570"/>
<path d="M1090 355 C1091.1 362.5 1094.5 382.5 1096.7 400 C1098.9 417.5 1100.5 440.6 1103.3 460 C1106.1 479.4 1110.0 498.4 1113.3 516.7 C1116.6 535.0 1122.2 555.6 1123.3 570 C1124.4 584.4 1118.9 593.8 1120 603.3 C1121.1 612.8 1125.0 617.8 1130 626.7 C1135.0 635.6 1143.3 648.9 1150 656.7 C1156.7 664.5 1166.7 670.5 1170 673.3"/>
<path d="M953.3 626.7 C956.6 631.7 965.5 649.5 973.3 656.7 C981.1 663.9 995.5 667.8 1000 670"/>
<path d="M1040 633.3 C1045.5 631.6 1060.0 626.6 1073.3 623.3 C1086.6 620.0 1112.2 615.0 1120 613.3"/>
<path d="M1020 660 L1040 633.3"/>
<path d="M640 533.3 C645.5 532.8 662.2 528.3 673.3 530 C684.4 531.7 693.4 540.0 706.7 543.3 C720.0 546.6 745.5 548.9 753.3 550"/>
<path d="M640 583.3 C644.5 586.6 656.7 596.1 666.7 603.3 C676.7 610.5 690.6 617.8 700 626.7 C709.4 635.6 716.6 647.3 723.3 656.7 C730.0 666.1 735.5 674.4 740 683.3 C744.5 692.2 748.3 705.5 750 710"/>
<path d="M700 626.7 C706.7 626.7 726.7 623.9 740 626.7 C753.3 629.5 770.0 636.1 780 643.3 C790.0 650.5 792.2 663.9 800 670 C807.8 676.1 822.2 678.3 826.7 680"/>
<path d="M700 626.7 C695.5 630.6 683.3 639.5 673.3 650 C663.3 660.5 645.5 683.3 640 690"/>
<path d="M826.7 680 C826.1 675.0 821.1 658.9 823.3 650 C825.5 641.1 832.2 632.2 840 626.7 C847.8 621.2 865.0 618.4 870 616.7"/>
<path d="M753.3 550 C746.1 552.2 717.8 553.3 710 563.3 C702.2 573.3 708.4 599.4 706.7 610 C705.0 620.6 701.1 623.9 700 626.7"/>
<path d="M640 736.7 C646.7 733.9 661.7 724.5 680 720 C698.3 715.5 734.5 710.0 750 710 C765.5 710.0 765.0 721.7 773.3 720 C781.6 718.3 792.2 706.1 800 700 C807.8 693.9 810.5 686.6 820 683.3 C829.5 680.0 844.5 682.8 856.7 680 C868.9 677.2 887.2 668.9 893.3 666.7"/>
<path d="M640 493.3 C643.3 491.1 653.3 485.6 660 480 C666.7 474.4 676.7 463.3 680 460"/>
<path d="M663.3 480 C666.6 486.1 673.8 508.4 683.3 516.7 C692.8 525.0 713.9 527.8 720 530"/>
<path d="M926.7 355 C927.8 359.7 934.4 374.7 933.3 383.3 C932.2 391.9 922.2 402.8 920 406.7"/>
<path d="M920 666.7 C918.9 672.2 916.6 690.6 913.3 700 C910.0 709.4 905.5 715.5 900 723.3 C894.5 731.1 887.2 744.5 880 746.7 C872.8 748.9 863.4 741.7 856.7 736.7 C850.0 731.7 842.8 720.0 840 716.7"/>
<path d="M880 746.7 C890.0 747.2 927.2 747.8 940 750 C952.8 752.2 953.9 758.3 956.7 760"/>
<path d="M856.7 736.7 C856.1 744.5 852.8 770.0 853.3 783.3 C853.8 796.6 860.0 804.5 860 816.7 C860.0 828.9 854.4 844.5 853.3 856.7 C852.2 868.9 853.3 884.5 853.3 890"/>
<path d="M640 850 C648.3 847.2 676.1 838.8 690 833.3 C703.9 827.8 717.8 819.5 723.3 816.7"/>
<path d="M750 816.7 C753.9 821.1 763.8 835.5 773.3 843.3 C782.8 851.1 795.6 858.8 806.7 863.3 C817.8 867.8 825.6 866.7 840 870 C854.4 873.3 884.4 881.1 893.3 883.3"/>
<path d="M860 816.7 C867.8 813.9 893.4 803.3 906.7 800 C920.0 796.7 934.5 797.2 940 796.7"/>
<path d="M593.3 690 C592.6 694.5 588.9 707.4 588.9 716.7 C588.9 726.0 594.4 737.8 593.3 745.6 C592.2 753.4 587.8 757.8 582.2 763.3 C576.7 768.8 563.7 776.3 560 778.9"/>
<path d="M593.3 745.6 C599.6 743.7 617.4 737.7 631.1 734.4 C644.8 731.1 660.8 728.5 675.6 725.6 C690.4 722.7 707.8 718.9 720 716.7 C732.2 714.5 743.7 716.7 748.9 712.2 C754.1 707.8 750.7 693.7 751.1 690"/>
<path d="M748.9 712.2 C751.5 713.3 758.1 718.1 764.4 718.9 C770.7 719.6 783.0 717.1 786.7 716.7"/>
<path d="M546.7 850 C553.4 849.3 572.6 847.5 586.7 845.6 C600.8 843.8 616.3 840.4 631.1 838.9 C645.9 837.4 660.8 837.8 675.6 836.7 C690.4 835.6 708.1 833.3 720 832.2 C731.9 831.1 742.2 830.4 746.7 830"/>
<path d="M548.9 858.9 C557.0 858.5 580.4 858.9 597.8 856.7 C615.2 854.5 632.9 849.3 653.3 845.6 C673.7 841.9 708.9 836.3 720 834.4"/>
<path d="M751.1 801.1 C751.5 806.3 751.8 821.8 753.3 832.2 C754.8 842.6 756.3 853.7 760 863.3 C763.7 872.9 772.3 881.9 775.6 890 C778.9 898.1 780.0 906.3 780 912.2 C780.0 918.1 776.3 923.4 775.6 925.6"/>
<path d="M853.3 734.4 C853.7 740.0 854.9 757.4 855.6 767.8 C856.4 778.2 858.2 787.5 857.8 796.7 C857.4 806.0 854.4 813.3 853.3 823.3 C852.2 833.3 851.5 851.1 851.1 856.7"/>
<path d="M764.4 805.6 C768.1 807.1 780.0 810.0 786.7 814.4 C793.4 818.8 797.7 826.3 804.4 832.2 C811.1 838.1 820.8 842.2 826.7 850 C832.6 857.8 836.3 872.2 840 878.9 C843.7 885.6 847.4 888.1 848.9 890"/>
<path d="M857.8 796.7 C862.6 798.2 876.3 802.7 886.7 805.6 C897.1 808.5 914.5 812.9 920 814.4"/>
<path d="M711.1 845.6 C710.7 851.1 708.5 867.8 708.9 878.9 C709.3 890.0 714.0 904.4 713.3 912.2 C712.5 920.0 706.6 920.4 704.4 925.6 C702.2 930.8 700.7 940.3 700 943.3"/>
<path d="M520 916.7 C525.5 914.5 540.3 905.9 553.3 903.3 C566.3 900.7 584.8 903.3 597.8 901.1 C610.8 898.9 620.0 891.1 631.1 890 C642.2 888.9 654.0 894.4 664.4 894.4 C674.8 894.4 685.5 893.3 693.3 890 C701.1 886.7 708.1 877.0 711.1 874.4"/>
<path d="M662.2 907.8 C662.6 912.2 662.2 927.0 664.4 934.4 C666.6 941.8 673.7 949.2 675.6 952.2"/>
<path d="M555.6 967.8 C560.8 965.9 576.0 960.4 586.7 956.7 C597.4 953.0 610.4 949.3 620 945.6 C629.6 941.9 640.3 936.3 644.4 934.4"/>
<path d="M520 814.4 C522.2 816.6 529.6 822.6 533.3 827.8 C537.0 833.0 539.6 838.9 542.2 845.6 C544.8 852.3 547.0 860.4 548.9 867.8 C550.8 875.2 551.4 882.6 553.3 890 C555.1 897.4 558.1 902.9 560 912.2 C561.9 921.5 564.4 934.5 564.4 945.6 C564.4 956.7 560.7 973.4 560 978.9"/>
<path d="M597.8 856.7 C595.9 860.4 592.3 873.4 586.7 878.9 C581.1 884.4 571.8 887.4 564.4 890 C557.0 892.6 549.6 894.4 542.2 894.4 C534.8 894.4 523.7 890.7 520 890"/>
<path d="M711.1 874.4 C714.4 874.4 724.1 874.8 731.1 874.4 C738.1 874.0 749.6 872.6 753.3 872.2"/>
<path d="M0 896.7 C8.3 897.2 33.3 900.6 50 900 C66.7 899.4 85.0 895.5 100 893.3 C115.0 891.1 126.1 890.0 140 886.7 C153.9 883.4 167.8 874.4 183.3 873.3 C198.9 872.2 213.9 875.5 233.3 880 C252.8 884.5 277.8 897.8 300 900 C322.2 902.2 347.2 896.1 366.7 893.3 C386.1 890.5 401.1 885.5 416.7 883.3 C432.2 881.1 452.8 880.5 460 880"/>
<path d="M190 873.3 C189.4 882.2 188.4 911.1 186.7 926.7 C185.0 942.3 183.3 954.5 180 966.7 C176.7 978.9 172.8 985.6 166.7 1000 C160.6 1014.4 150.0 1037.8 143.3 1053.3 C136.6 1068.8 133.9 1078.3 126.7 1093.3 C119.5 1108.3 106.7 1128.3 100 1143.3 C93.3 1158.3 88.9 1176.6 86.7 1183.3"/>
<path d="M0 960 C5.5 961.7 22.2 960.5 33.3 970 C44.4 979.5 61.7 1001.7 66.7 1016.7 C71.7 1031.7 64.4 1041.7 63.3 1060 C62.2 1078.3 61.1 1106.7 60 1126.7 C58.9 1146.7 57.2 1171.1 56.7 1180"/>
<path d="M66.7 1016.7 C72.2 1013.9 88.9 1005.0 100 1000 C111.1 995.0 120.0 992.2 133.3 986.7 C146.6 981.2 172.2 970.0 180 966.7"/>
<path d="M180 966.7 C188.9 967.8 213.3 974.4 233.3 973.3 C253.3 972.2 278.9 965.5 300 960 C321.1 954.5 347.2 946.7 360 940 C372.8 933.3 372.8 927.8 376.7 920 C380.6 912.2 382.2 897.8 383.3 893.3"/>
<path d="M200 973.3 C202.8 976.6 206.7 986.1 216.7 993.3 C226.7 1000.5 250.6 1005.6 260 1016.7 C269.4 1027.8 270.5 1045.0 273.3 1060 C276.1 1075.0 276.1 1098.9 276.7 1106.7"/>
<path d="M143.3 1053.3 C146.1 1061.1 152.8 1087.2 160 1100 C167.2 1112.8 174.5 1127.8 186.7 1130 C198.9 1132.2 218.3 1117.2 233.3 1113.3 C248.3 1109.4 262.8 1107.8 276.7 1106.7 C290.6 1105.6 302.8 1111.7 316.7 1106.7 C330.6 1101.7 346.1 1086.7 360 1076.7 C373.9 1066.7 385.6 1058.4 400 1046.7 C414.4 1035.0 433.9 1018.4 446.7 1006.7 C459.5 995.0 471.7 981.7 476.7 976.7"/>
<path d="M186.7 1130 C188.4 1136.7 196.7 1155.0 196.7 1170 C196.7 1185.0 191.1 1204.5 186.7 1220 C182.2 1235.5 173.9 1251.1 170 1263.3 C166.1 1275.5 164.4 1288.3 163.3 1293.3"/>
<path d="M276.7 1106.7 C278.4 1113.4 289.5 1132.8 286.7 1146.7 C283.9 1160.6 266.1 1176.7 260 1190 C253.9 1203.3 252.2 1215.0 250 1226.7 C247.8 1238.4 247.2 1254.5 246.7 1260"/>
<path d="M286.7 1146.7 C291.7 1153.4 308.9 1173.4 316.7 1186.7 C324.5 1200.0 330.5 1220.0 333.3 1226.7"/>
<path d="M320 1110 C322.2 1118.3 331.1 1148.9 333.3 1160 C335.5 1171.1 333.3 1173.9 333.3 1176.7"/>
<path d="M360 1076.7 C357.2 1085.0 347.8 1110.0 343.3 1126.7 C338.9 1143.4 335.0 1168.4 333.3 1176.7"/>
<path d="M333.3 1176.7 C330.5 1180.6 323.9 1190.6 316.7 1200 C309.5 1209.4 295.6 1224.4 290 1233.3 C284.4 1242.2 284.4 1250.0 283.3 1253.3"/>
<path d="M446.7 1006.7 C448.9 1015.6 455.6 1042.2 460 1060 C464.4 1077.8 470.5 1100.8 473.3 1113.3 C476.1 1125.8 476.7 1121.7 476.7 1135 C476.7 1148.3 472.2 1176.9 473.3 1193.3 C474.4 1209.7 481.6 1226.6 483.3 1233.3"/>
<path d="M376.7 920 C380.6 926.7 388.3 945.5 400 960 C411.7 974.5 438.9 998.9 446.7 1006.7"/>
<path d="M466.7 956.7 C469.5 960.0 472.2 971.7 483.3 976.7 C494.4 981.7 519.4 985.0 533.3 986.7 C547.2 988.4 561.1 986.7 566.7 986.7"/>
<path d="M0 1073.3 C5.5 1071.1 22.2 1062.2 33.3 1060 C44.4 1057.8 61.1 1060.0 66.7 1060"/>
<path d="M110 1196.7 C105.5 1194.5 92.8 1186.1 83.3 1183.3 C73.8 1180.5 62.7 1178.3 53.3 1180 C43.9 1181.7 35.6 1188.3 26.7 1193.3 C17.8 1198.3 4.5 1207.2 0 1210"/>
<path d="M130 1226.7 C133.3 1232.2 149.4 1248.9 150 1260 C150.6 1271.1 138.9 1283.3 133.3 1293.3 C127.8 1303.3 117.8 1310.0 116.7 1320 C115.6 1330.0 127.8 1340.0 126.7 1353.3 C125.6 1366.6 112.8 1392.2 110 1400"/>
<path d="M150 1260 C158.3 1261.7 183.3 1270.0 200 1270 C216.7 1270.0 233.3 1262.8 250 1260 C266.7 1257.2 286.1 1258.8 300 1253.3 C313.9 1247.8 322.2 1228.4 333.3 1226.7 C344.4 1225.0 355.6 1235.0 366.7 1243.3 C377.8 1251.6 388.9 1268.4 400 1276.7 C411.1 1285.0 427.8 1290.5 433.3 1293.3"/>
<path d="M246.7 1260 C246.7 1267.2 243.4 1289.4 246.7 1303.3 C250.0 1317.2 261.7 1330.5 266.7 1343.3 C271.7 1356.1 276.7 1370.5 276.7 1380 C276.7 1389.5 268.4 1396.7 266.7 1400"/>
<path d="M200 1270 C197.8 1276.7 187.8 1297.8 186.7 1310 C185.6 1322.2 196.6 1335.0 193.3 1343.3 C190.0 1351.6 177.8 1358.3 166.7 1360 C155.6 1361.7 133.4 1354.4 126.7 1353.3"/>
<path d="M333.3 1293.3 C338.9 1296.1 355.6 1308.3 366.7 1310 C377.8 1311.7 389.4 1300.5 400 1303.3 C410.6 1306.1 418.9 1320.0 430 1326.7 C441.1 1333.4 455.0 1342.2 466.7 1343.3 C478.4 1344.4 488.9 1333.8 500 1333.3 C511.1 1332.8 527.8 1338.9 533.3 1340"/>
<path d="M400 1303.3 C398.3 1310.0 391.1 1330.5 390 1343.3 C388.9 1356.1 392.8 1373.9 393.3 1380"/>
<path d="M483.3 1233.3 C484.4 1240.5 487.2 1260.0 490 1276.7 C492.8 1293.4 498.3 1323.9 500 1333.3"/>
<path d="M0 1293.3 C5.5 1292.2 24.4 1288.9 33.3 1286.7 C42.2 1284.5 50.0 1281.1 53.3 1280"/>
<path d="M96.7 1270 L133.3 1293.3"/>
<path d="M333.3 1226.7 C332.8 1232.2 330.0 1248.9 330 1260 C330.0 1271.1 335.5 1282.2 333.3 1293.3 C331.1 1304.4 318.9 1315.6 316.7 1326.7 C314.5 1337.8 317.2 1347.8 320 1360 C322.8 1372.2 331.1 1393.3 333.3 1400"/>
<path d="M66.7 1326.7 C72.2 1329.5 90.0 1338.9 100 1343.3 C110.0 1347.7 122.2 1351.6 126.7 1353.3"/>
<path d="M30 1193.3 C28.3 1198.9 20.6 1215.6 20 1226.7 C19.4 1237.8 21.7 1250.0 26.7 1260 C31.7 1270.0 45.6 1275.6 50 1286.7 C54.4 1297.8 55.0 1314.5 53.3 1326.7 C51.6 1338.9 43.3 1347.8 40 1360 C36.7 1372.2 34.4 1393.3 33.3 1400"/>
<path d="M63.3 1300 C59.4 1305.5 45.0 1320.0 40 1333.3 C35.0 1346.6 32.8 1366.7 33.3 1380 C33.8 1393.3 38.8 1402.2 43.3 1413.3 C47.8 1424.4 57.2 1441.1 60 1446.7"/>
<path d="M0 1313.3 C5.5 1310.5 22.8 1298.9 33.3 1296.7 C43.8 1294.5 58.3 1299.5 63.3 1300"/>
<path d="M116.7 1306.7 C118.4 1303.4 118.4 1294.5 126.7 1286.7 C135.0 1278.9 152.3 1265.6 166.7 1260 C181.1 1254.4 200.0 1251.1 213.3 1253.3 C226.6 1255.5 241.1 1270.0 246.7 1273.3"/>
<path d="M116.7 1306.7 L110 1356.7"/>
<path d="M246.7 1273.3 C247.2 1280.0 245.6 1301.1 250 1313.3 C254.4 1325.5 267.8 1338.4 273.3 1346.7 C278.9 1355.0 284.4 1356.6 283.3 1363.3 C282.2 1370.0 268.4 1375.6 266.7 1386.7 C265.0 1397.8 270.0 1420.0 273.3 1430 C276.6 1440.0 284.5 1443.9 286.7 1446.7"/>
<path d="M246.7 1273.3 C255.6 1270.0 285.6 1254.4 300 1253.3 C314.4 1252.2 323.3 1263.9 333.3 1266.7 C343.3 1269.5 348.9 1270.0 360 1270 C371.1 1270.0 385.0 1271.7 400 1266.7 C415.0 1261.7 436.1 1243.3 450 1240 C463.9 1236.7 471.6 1241.2 483.3 1246.7 C495.0 1252.2 510.6 1265.0 520 1273.3 C529.5 1281.6 535.5 1290.0 540 1296.7 C544.5 1303.4 545.6 1310.5 546.7 1313.3"/>
<path d="M390 1303.3 C391.1 1310.5 396.1 1333.9 396.7 1346.7 C397.2 1359.5 392.8 1370.0 393.3 1380 C393.9 1390.0 398.9 1402.2 400 1406.7"/>
<path d="M320 1320 C322.2 1317.8 321.6 1309.5 333.3 1306.7 C345.0 1303.9 373.3 1302.2 390 1303.3 C406.7 1304.4 420.5 1307.2 433.3 1313.3 C446.1 1319.4 456.7 1332.8 466.7 1340 C476.7 1347.2 488.9 1353.9 493.3 1356.7"/>
<path d="M320 1320 C321.1 1327.2 324.5 1350.5 326.7 1363.3 C328.9 1376.1 331.6 1388.4 333.3 1396.7 C335.0 1405.0 336.1 1410.5 336.7 1413.3"/>
<path d="M273.3 1346.7 L320 1333.3"/>
<path d="M126.7 1410 C122.2 1410.5 111.7 1413.8 100 1413.3 C88.3 1412.8 67.8 1412.2 56.7 1406.7 C45.6 1401.2 37.2 1384.5 33.3 1380"/>
<path d="M143.3 1366.7 C152.8 1367.8 179.4 1370.0 200 1373.3 C220.6 1376.6 255.6 1384.5 266.7 1386.7"/>
<path d="M143.3 1366.7 C142.8 1372.2 139.4 1388.9 140 1400 C140.6 1411.1 145.6 1427.8 146.7 1433.3"/>
<path d="M0 1463.3 C5.5 1470.5 22.2 1498.4 33.3 1506.7 C44.4 1515.0 57.2 1514.4 66.7 1513.3 C76.2 1512.2 84.5 1508.3 90 1500 C95.5 1491.7 96.7 1477.8 100 1463.3 C103.3 1448.8 108.3 1421.6 110 1413.3"/>
<path d="M90 1500 C90.0 1507.8 90.5 1532.2 90 1546.7 C89.5 1561.2 85.0 1574.5 86.7 1586.7 C88.4 1598.9 97.8 1614.5 100 1620"/>
<path d="M33.3 1506.7 C31.1 1513.4 25.6 1537.3 20 1546.7 C14.4 1556.1 3.3 1560.5 0 1563.3"/>
<path d="M153.3 1516.7 C153.9 1522.8 157.8 1541.6 156.7 1553.3 C155.6 1565.0 147.3 1575.6 146.7 1586.7 C146.1 1597.8 152.2 1614.5 153.3 1620"/>
<path d="M90 1546.7 C96.1 1545.6 116.2 1545.0 126.7 1540 C137.2 1535.0 143.3 1521.2 153.3 1516.7 C163.3 1512.2 177.2 1516.6 186.7 1513.3 C196.1 1510.0 203.3 1502.8 210 1496.7 C216.7 1490.6 223.9 1480.0 226.7 1476.7"/>
<path d="M210 1496.7 C210.6 1502.2 215.0 1518.9 213.3 1530 C211.6 1541.1 204.4 1553.8 200 1563.3 C195.6 1572.8 187.8 1577.2 186.7 1586.7 C185.6 1596.2 192.2 1614.5 193.3 1620"/>
<path d="M300 1553.3 C300.0 1557.8 297.8 1572.2 300 1580 C302.2 1587.8 307.8 1593.3 313.3 1600 C318.9 1606.7 330.0 1616.7 333.3 1620"/>
<path d="M300 1553.3 C305.6 1554.4 319.4 1558.3 333.3 1560 C347.2 1561.7 369.4 1563.3 383.3 1563.3 C397.2 1563.3 402.8 1562.8 416.7 1560 C430.6 1557.2 450.0 1551.7 466.7 1546.7 C483.4 1541.7 500.0 1536.7 516.7 1530 C533.4 1523.3 550.0 1513.9 566.7 1506.7 C583.4 1499.5 602.8 1491.2 616.7 1486.7 C630.6 1482.2 644.5 1481.1 650 1480"/>
<path d="M400 1406.7 C400.6 1413.4 402.2 1431.7 403.3 1446.7 C404.4 1461.7 405.0 1477.8 406.7 1496.7 C408.4 1515.6 414.4 1543.3 413.3 1560 C412.2 1576.7 405.0 1586.7 400 1596.7 C395.0 1606.7 386.1 1616.1 383.3 1620"/>
<path d="M400 1446.7 C408.3 1445.6 433.3 1440.0 450 1440 C466.7 1440.0 488.9 1440.0 500 1446.7 C511.1 1453.4 513.9 1466.1 516.7 1480 C519.5 1493.9 516.7 1521.7 516.7 1530"/>
<path d="M500 1446.7 C505.6 1441.1 522.2 1424.4 533.3 1413.3 C544.4 1402.2 558.9 1388.9 566.7 1380 C574.5 1371.1 577.8 1363.3 580 1360"/>
<path d="M516.7 1530 C513.9 1535.5 497.2 1555.0 500 1563.3 C502.8 1571.6 525.0 1573.9 533.3 1580 C541.6 1586.1 544.4 1593.3 550 1600 C555.6 1606.7 563.9 1616.7 566.7 1620"/>
<path d="M406.7 1496.7 C413.9 1496.1 434.4 1490.5 450 1493.3 C465.6 1496.1 491.7 1510.0 500 1513.3"/>
<path d="M450 1563.3 C451.7 1568.9 454.4 1587.2 460 1596.7 C465.6 1606.2 479.4 1616.1 483.3 1620"/>
<path d="M566.7 1506.7 C567.8 1499.5 573.3 1478.9 573.3 1463.3 C573.3 1447.7 565.6 1427.2 566.7 1413.3 C567.8 1399.4 577.8 1385.5 580 1380"/>
<path d="M616.7 1486.7 C619.5 1480.0 627.8 1460.0 633.3 1446.7 C638.8 1433.4 645.5 1415.6 650 1406.7 C654.5 1397.8 658.3 1395.5 660 1393.3"/>
<path d="M650 1480 C652.8 1485.5 658.4 1505.0 666.7 1513.3 C675.0 1521.6 691.1 1524.4 700 1530 C708.9 1535.6 716.7 1543.9 720 1546.7"/>
<path d="M580 1360 C583.3 1363.3 591.1 1375.5 600 1380 C608.9 1384.5 627.8 1385.6 633.3 1386.7"/>
<path d="M183.3 1443.3 C180.5 1449.4 171.7 1467.8 166.7 1480 C161.7 1492.2 155.5 1510.6 153.3 1516.7"/>
<path d="M0 1593.3 C5.5 1594.4 19.4 1601.1 33.3 1600 C47.2 1598.9 75.0 1588.9 83.3 1586.7"/>
<path d="M213.3 1586.7 C219.4 1585.6 238.3 1582.2 250 1580 C261.7 1577.8 275.0 1573.3 283.3 1573.3 C291.6 1573.3 297.2 1578.9 300 1580"/>
<path d="M650 1480 C647.2 1488.3 638.8 1516.1 633.3 1530 C627.8 1543.9 616.7 1548.3 616.7 1563.3 C616.7 1578.3 630.5 1610.5 633.3 1620"/>
<path d="M680 1496.7 C680.5 1507.8 680.0 1542.8 683.3 1563.3 C686.6 1583.8 697.2 1610.5 700 1620"/>
<path d="M786.7 1380 C787.2 1385.5 791.1 1402.2 790 1413.3 C788.9 1424.4 782.2 1435.6 780 1446.7 C777.8 1457.8 776.2 1466.1 776.7 1480 C777.2 1493.9 778.9 1516.1 783.3 1530 C787.7 1543.9 797.2 1548.3 803.3 1563.3 C809.4 1578.3 817.2 1610.5 820 1620"/>
<path d="M830 1380 C833.9 1385.5 848.3 1402.2 853.3 1413.3 C858.3 1424.4 854.4 1435.6 860 1446.7 C865.6 1457.8 882.2 1474.5 886.7 1480"/>
<path d="M776.7 1446.7 C783.9 1446.1 807.2 1445.5 820 1443.3 C832.8 1441.1 841.1 1433.8 853.3 1433.3 C865.5 1432.8 880.0 1440.5 893.3 1440 C906.6 1439.5 916.1 1432.8 933.3 1430 C950.5 1427.2 976.7 1426.1 996.7 1423.3 C1016.7 1420.5 1043.9 1415.0 1053.3 1413.3"/>
<path d="M853.3 1433.3 C852.2 1441.1 848.9 1468.9 846.7 1480 C844.5 1491.1 842.8 1494.5 840 1500 C837.2 1505.5 831.7 1511.1 830 1513.3"/>
<path d="M996.7 1373.3 C996.7 1381.6 993.9 1408.3 996.7 1423.3 C999.5 1438.3 1008.3 1448.3 1013.3 1463.3 C1018.3 1478.3 1022.2 1499.4 1026.7 1513.3 C1031.2 1527.2 1037.2 1535.6 1040 1546.7 C1042.8 1557.8 1043.3 1567.8 1043.3 1580 C1043.3 1592.2 1040.5 1613.3 1040 1620"/>
<path d="M1076.7 1413.3 C1077.2 1418.9 1078.3 1432.8 1080 1446.7 C1081.7 1460.6 1082.8 1485.6 1086.7 1496.7 C1090.6 1507.8 1100.5 1510.5 1103.3 1513.3"/>
<path d="M1053.3 1413.3 C1057.2 1413.3 1068.4 1412.2 1076.7 1413.3 C1085.0 1414.4 1096.1 1421.1 1103.3 1420 C1110.5 1418.9 1112.8 1412.2 1120 1406.7 C1127.2 1401.2 1142.2 1390.0 1146.7 1386.7"/>
<path d="M1040 1436.7 C1039.5 1441.1 1034.5 1456.1 1036.7 1463.3 C1038.9 1470.5 1050.5 1477.2 1053.3 1480"/>
<path d="M1096.7 1346.7 C1093.9 1352.2 1083.3 1368.9 1080 1380 C1076.7 1391.1 1077.2 1407.8 1076.7 1413.3"/>
<path d="M1146.7 1386.7 C1144.5 1391.1 1137.8 1404.4 1133.3 1413.3 C1128.8 1422.2 1119.4 1428.9 1120 1440 C1120.6 1451.1 1131.7 1468.9 1136.7 1480 C1141.7 1491.1 1147.8 1502.2 1150 1506.7"/>
<path d="M1163.3 1313.3 C1163.9 1318.9 1169.5 1334.5 1166.7 1346.7 C1163.9 1358.9 1150.0 1380.0 1146.7 1386.7"/>
<path d="M1123.3 1240 C1123.9 1246.7 1120.0 1267.8 1126.7 1280 C1133.4 1292.2 1150.5 1306.1 1163.3 1313.3 C1176.1 1320.5 1193.8 1320.5 1203.3 1323.3 C1212.8 1326.1 1217.2 1328.9 1220 1330"/>
<path d="M1220 1330 C1218.9 1338.3 1215.0 1366.1 1213.3 1380 C1211.6 1393.9 1210.0 1400.5 1210 1413.3 C1210.0 1426.1 1212.8 1449.5 1213.3 1456.7"/>
<path d="M1113.3 1196.7 C1117.2 1201.1 1135.0 1216.1 1136.7 1223.3 C1138.4 1230.5 1125.5 1237.2 1123.3 1240"/>
<path d="M1106.7 1293.3 C1111.7 1295.5 1127.3 1303.4 1136.7 1306.7 C1146.1 1310.0 1158.9 1312.2 1163.3 1313.3"/>
<path d="M1130 1120 C1131.1 1127.2 1130.0 1151.6 1136.7 1163.3 C1143.4 1175.0 1163.3 1184.4 1170 1190 C1176.7 1195.6 1175.6 1195.6 1176.7 1196.7"/>
<path d="M1170 1190 C1172.8 1182.8 1181.2 1158.4 1186.7 1146.7 C1192.2 1135.0 1203.3 1129.5 1203.3 1120 C1203.3 1110.5 1189.5 1095.0 1186.7 1090"/>
<path d="M1203.3 1120 C1211.6 1119.5 1239.4 1120.0 1253.3 1116.7 C1267.2 1113.4 1275.6 1106.1 1286.7 1100 C1297.8 1093.9 1314.5 1083.3 1320 1080"/>
<path d="M1176.7 1196.7 C1183.9 1193.9 1207.2 1183.9 1220 1180 C1232.8 1176.1 1236.6 1176.1 1253.3 1173.3 C1270.0 1170.5 1297.8 1166.1 1320 1163.3 C1342.2 1160.5 1366.7 1162.2 1386.7 1156.7 C1406.7 1151.2 1431.1 1134.5 1440 1130"/>
<path d="M1253.3 1173.3 C1256.1 1180.0 1272.2 1196.1 1270 1213.3 C1267.8 1230.5 1245.0 1266.1 1240 1276.7"/>
<path d="M1320 1163.3 C1320.0 1168.9 1314.5 1188.4 1320 1196.7 C1325.5 1205.0 1345.0 1205.0 1353.3 1213.3 C1361.6 1221.6 1370.0 1236.7 1370 1246.7 C1370.0 1256.7 1356.1 1268.9 1353.3 1273.3"/>
<path d="M1386.7 1156.7 C1389.5 1163.4 1397.8 1186.2 1403.3 1196.7 C1408.8 1207.2 1413.9 1215.0 1420 1220 C1426.1 1225.0 1436.7 1225.6 1440 1226.7"/>
<path d="M1240 1276.7 C1242.2 1282.8 1250.0 1301.6 1253.3 1313.3 C1256.6 1325.0 1254.4 1335.6 1260 1346.7 C1265.6 1357.8 1277.8 1370.0 1286.7 1380 C1295.6 1390.0 1306.1 1397.8 1313.3 1406.7 C1320.5 1415.6 1327.2 1428.9 1330 1433.3"/>
<path d="M1330 1433.3 C1331.7 1437.2 1336.1 1448.9 1340 1456.7 C1343.9 1464.5 1346.6 1471.1 1353.3 1480 C1360.0 1488.9 1371.7 1500.0 1380 1510 C1388.3 1520.0 1399.4 1535.0 1403.3 1540"/>
<path d="M1286.7 1380 C1292.2 1377.2 1308.9 1365.5 1320 1363.3 C1331.1 1361.1 1343.3 1363.9 1353.3 1366.7 C1363.3 1369.5 1375.5 1377.8 1380 1380"/>
<path d="M1213.3 1456.7 L1240 1473.3"/>
<path d="M1303.3 1520 C1306.1 1524.5 1311.7 1539.5 1320 1546.7 C1328.3 1553.9 1342.2 1558.9 1353.3 1563.3 C1364.4 1567.7 1372.2 1570.5 1386.7 1573.3 C1401.2 1576.1 1431.1 1578.9 1440 1580"/>
<path d="M1353.3 1273.3 C1356.1 1280.0 1364.4 1301.1 1370 1313.3 C1375.6 1325.5 1382.8 1336.7 1386.7 1346.7 C1390.6 1356.7 1392.2 1368.9 1393.3 1373.3"/>
<path d="M720 1513.3 C725.5 1516.1 742.2 1524.4 753.3 1530 C764.4 1535.6 778.4 1541.2 786.7 1546.7 C795.0 1552.2 800.5 1560.5 803.3 1563.3"/>
<path d="M886.7 1480 C887.8 1488.3 893.3 1516.1 893.3 1530 C893.3 1543.9 891.1 1555.0 886.7 1563.3 C882.3 1571.6 872.3 1570.5 866.7 1580 C861.1 1589.5 855.5 1613.3 853.3 1620"/>
<path d="M720 1573.3 C725.5 1574.4 742.2 1577.8 753.3 1580 C764.4 1582.2 775.6 1580.0 786.7 1586.7 C797.8 1593.4 814.5 1614.5 820 1620"/>
<path d="M953.3 1546.7 C958.9 1545.6 974.5 1545.6 986.7 1540 C998.9 1534.4 1020.0 1517.8 1026.7 1513.3"/>
<path d="M1086.7 1496.7 C1081.1 1502.2 1061.1 1521.7 1053.3 1530 C1045.5 1538.3 1042.2 1543.9 1040 1546.7"/>
<path d="M1103.3 1513.3 C1106.1 1518.9 1112.2 1540.0 1120 1546.7 C1127.8 1553.4 1145.0 1552.2 1150 1553.3"/>
<path d="M1186.7 1426.7 C1183.9 1430.0 1175.6 1441.7 1170 1446.7 C1164.4 1451.7 1156.1 1455.0 1153.3 1456.7"/>
<path d="M1440 1096.7 C1448.3 1097.2 1480.0 1094.5 1490 1100 C1500.0 1105.5 1498.9 1119.5 1500 1130 C1501.1 1140.5 1501.2 1153.3 1496.7 1163.3 C1492.2 1173.3 1482.8 1182.8 1473.3 1190 C1463.8 1197.2 1445.5 1203.9 1440 1206.7"/>
<path d="M1490 1100 C1501.1 1103.9 1541.7 1112.8 1556.7 1123.3 C1571.7 1133.8 1573.3 1152.2 1580 1163.3 C1586.7 1174.4 1593.4 1177.2 1596.7 1190 C1600.0 1202.8 1599.5 1231.7 1600 1240"/>
<path d="M1496.7 1163.3 C1503.9 1166.1 1526.1 1180.0 1540 1180 C1553.9 1180.0 1573.3 1166.1 1580 1163.3"/>
<path d="M1600 1246.7 C1599.5 1255.0 1596.2 1283.4 1596.7 1296.7 C1597.2 1310.0 1595.0 1320.6 1603.3 1326.7 C1611.6 1332.8 1635.0 1328.9 1646.7 1333.3 C1658.4 1337.7 1666.6 1342.7 1673.3 1353.3 C1680.0 1363.9 1682.2 1384.5 1686.7 1396.7 C1691.2 1408.9 1693.9 1420.6 1700 1426.7 C1706.1 1432.8 1719.4 1432.2 1723.3 1433.3"/>
<path d="M1440 1320 C1445.5 1318.9 1459.4 1312.2 1473.3 1313.3 C1487.2 1314.4 1507.2 1329.5 1523.3 1326.7 C1539.4 1323.9 1557.8 1301.7 1570 1296.7 C1582.2 1291.7 1592.2 1296.7 1596.7 1296.7"/>
<path d="M1570 1296.7 C1569.5 1291.7 1568.9 1272.8 1566.7 1266.7 C1564.5 1260.6 1558.4 1261.1 1556.7 1260"/>
<path d="M1460 1273.3 C1460.5 1281.1 1461.1 1306.7 1463.3 1320 C1465.5 1333.3 1472.2 1343.3 1473.3 1353.3 C1474.4 1363.3 1467.2 1370.8 1470 1380 C1472.8 1389.2 1486.7 1403.6 1490 1408.3"/>
<path d="M1490 1408.3 C1492.8 1414.7 1503.4 1434.8 1506.7 1446.7 C1510.0 1458.7 1511.1 1467.8 1510 1480 C1508.9 1492.2 1504.5 1506.7 1500 1520 C1495.5 1533.3 1486.1 1553.3 1483.3 1560"/>
<path d="M1506.7 1446.7 C1513.9 1447.8 1537.8 1448.9 1550 1453.3 C1562.2 1457.7 1568.3 1466.1 1580 1473.3 C1591.7 1480.5 1610.0 1490.0 1620 1496.7 C1630.0 1503.4 1636.7 1510.5 1640 1513.3"/>
<path d="M1633.3 1420 C1633.9 1427.2 1633.4 1452.8 1636.7 1463.3 C1640.0 1473.8 1650.5 1480.0 1653.3 1483.3"/>
<path d="M1493.3 1390 C1501.1 1386.7 1523.9 1377.2 1540 1370 C1556.1 1362.8 1572.2 1352.8 1590 1346.7 C1607.8 1340.6 1637.2 1335.5 1646.7 1333.3"/>
<path d="M1646.7 1333.3 L1650 1300"/>
<path d="M1773.3 1366.7 C1771.1 1367.8 1761.1 1365.5 1760 1373.3 C1758.9 1381.1 1770.0 1406.1 1766.7 1413.3 C1763.4 1420.5 1744.5 1416.1 1740 1416.7"/>
<path d="M1806.7 1393.3 C1806.7 1399.4 1803.9 1422.2 1806.7 1430 C1809.5 1437.8 1817.8 1439.5 1823.3 1440 C1828.8 1440.5 1834.4 1437.8 1840 1433.3 C1845.6 1428.8 1853.9 1416.6 1856.7 1413.3"/>
<path d="M1823.3 1440 C1820.5 1446.7 1813.4 1468.3 1806.7 1480 C1800.0 1491.7 1788.9 1504.5 1783.3 1510 C1777.7 1515.5 1775.0 1512.8 1773.3 1513.3"/>
<path d="M1723.3 1433.3 C1727.2 1437.2 1740.6 1448.9 1746.7 1456.7 C1752.8 1464.5 1755.6 1470.6 1760 1480 C1764.4 1489.4 1770.0 1502.2 1773.3 1513.3 C1776.6 1524.4 1781.1 1535.6 1780 1546.7 C1778.9 1557.8 1770.0 1567.8 1766.7 1580 C1763.4 1592.2 1761.1 1613.3 1760 1620"/>
<path d="M1620 1545 C1621.1 1550.8 1626.7 1567.5 1626.7 1580 C1626.7 1592.5 1621.1 1613.3 1620 1620"/>
<path d="M1506.7 1560 C1509.5 1565.0 1523.3 1580.0 1523.3 1590 C1523.3 1600.0 1509.5 1615.0 1506.7 1620"/>
<path d="M1716.7 1580 C1720.6 1577.2 1729.5 1568.8 1740 1563.3 C1750.5 1557.8 1773.3 1549.5 1780 1546.7"/>
<path d="M1440 1446.7 C1445.5 1443.9 1462.2 1430.0 1473.3 1430 C1484.4 1430.0 1501.1 1443.9 1506.7 1446.7"/>
<path d="M1840 1353.3 C1840.5 1357.8 1840.5 1370.0 1843.3 1380 C1846.1 1390.0 1857.8 1404.4 1856.7 1413.3 C1855.6 1422.2 1840.0 1430.0 1836.7 1433.3"/>
<path d="M1816.7 1300 C1818.4 1302.2 1823.1 1311.6 1826.7 1313.3 C1830.3 1315.0 1836.4 1310.5 1838.3 1310"/>
<path d="M1136.7 966.7 C1133.4 970.0 1121.2 978.4 1116.7 986.7 C1112.2 995.0 1109.5 1006.7 1110 1016.7 C1110.5 1026.7 1111.7 1038.9 1120 1046.7 C1128.3 1054.5 1150.0 1056.6 1160 1063.3 C1170.0 1070.0 1175.5 1077.8 1180 1086.7 C1184.5 1095.6 1185.6 1111.7 1186.7 1116.7"/>
<path d="M1136.7 966.7 C1138.9 971.1 1148.9 983.3 1150 993.3 C1151.1 1003.3 1141.6 1015.0 1143.3 1026.7 C1145.0 1038.4 1157.2 1057.2 1160 1063.3"/>
<path d="M1136.7 966.7 C1141.7 968.4 1156.2 972.3 1166.7 976.7 C1177.2 981.1 1191.7 986.1 1200 993.3 C1208.3 1000.5 1216.7 1008.9 1216.7 1020 C1216.7 1031.1 1209.5 1052.8 1200 1060 C1190.5 1067.2 1166.7 1062.8 1160 1063.3"/>
<path d="M1200 1060 C1208.3 1065.0 1235.5 1082.2 1250 1090 C1264.5 1097.8 1276.2 1099.5 1286.7 1106.7 C1297.2 1113.9 1307.8 1126.1 1313.3 1133.3 C1318.8 1140.5 1318.9 1147.2 1320 1150"/>
<path d="M1100 1080 C1105.5 1078.9 1120.0 1072.2 1133.3 1073.3 C1146.6 1074.4 1172.2 1084.5 1180 1086.7"/>
<path d="M1186.7 1116.7 C1184.5 1121.1 1176.1 1130.5 1173.3 1143.3 C1170.5 1156.1 1175.5 1184.4 1170 1193.3 C1164.5 1202.2 1145.0 1196.1 1140 1196.7"/>
<path d="M1186.7 1116.7 C1177.8 1118.4 1141.1 1119.5 1133.3 1126.7 C1125.5 1133.9 1134.4 1152.2 1140 1160 C1145.6 1167.8 1162.2 1171.1 1166.7 1173.3"/>
<path d="M1250 1170 C1249.5 1173.9 1248.4 1183.8 1246.7 1193.3 C1245.0 1202.8 1240.6 1215.6 1240 1226.7 C1239.4 1237.8 1243.8 1248.9 1243.3 1260 C1242.8 1271.1 1237.8 1287.8 1236.7 1293.3"/>
<path d="M1250 1090 L1300 1076.7"/>
<path d="M1333.3 1136.7 C1334.4 1143.4 1337.8 1164.5 1340 1176.7 C1342.2 1188.9 1344.5 1200.6 1346.7 1210 C1348.9 1219.4 1355.5 1222.2 1353.3 1233.3 C1351.1 1244.4 1339.4 1268.4 1333.3 1276.7 C1327.2 1285.0 1319.5 1282.2 1316.7 1283.3"/>
<path d="M1380 1116.7 C1381.7 1123.9 1386.7 1147.2 1390 1160 C1393.3 1172.8 1392.8 1183.3 1400 1193.3 C1407.2 1203.3 1423.3 1212.8 1433.3 1220 C1443.3 1227.2 1454.4 1230.0 1460 1236.7 C1465.6 1243.4 1465.6 1256.1 1466.7 1260"/>
<path d="M1426.7 1100 C1426.7 1107.2 1423.4 1128.8 1426.7 1143.3 C1430.0 1157.8 1442.8 1172.8 1446.7 1186.7 C1450.6 1200.6 1449.5 1220.0 1450 1226.7"/>
<path d="M1490 1100 C1491.7 1107.2 1499.5 1130.5 1500 1143.3 C1500.5 1156.1 1496.6 1165.6 1493.3 1176.7 C1490.0 1187.8 1481.1 1200.6 1480 1210 C1478.9 1219.4 1488.9 1225.0 1486.7 1233.3 C1484.5 1241.6 1470.0 1255.5 1466.7 1260"/>
<path d="M1500 1143.3 C1505.5 1148.9 1525.0 1168.4 1533.3 1176.7 C1541.6 1185.0 1544.4 1186.1 1550 1193.3 C1555.6 1200.5 1557.8 1212.2 1566.7 1220 C1575.6 1227.8 1597.2 1236.7 1603.3 1240"/>
<path d="M1560 1120 C1558.9 1126.7 1555.0 1147.8 1553.3 1160 C1551.6 1172.2 1550.5 1187.8 1550 1193.3"/>
<path d="M1466.7 1260 C1464.5 1265.5 1453.3 1283.3 1453.3 1293.3 C1453.3 1303.3 1465.6 1308.9 1466.7 1320 C1467.8 1331.1 1461.1 1353.3 1460 1360"/>
<path d="M1333.3 1276.7 C1336.1 1282.2 1344.4 1298.9 1350 1310 C1355.6 1321.1 1359.5 1333.8 1366.7 1343.3 C1373.9 1352.8 1388.9 1362.8 1393.3 1366.7"/>
<path d="M1246.7 1286.7 C1250.0 1290.6 1262.3 1300.6 1266.7 1310 C1271.1 1319.4 1267.8 1335.0 1273.3 1343.3 C1278.8 1351.6 1295.5 1357.2 1300 1360"/>
<path d="M1100 1236.7 C1105.5 1237.8 1122.2 1237.8 1133.3 1243.3 C1144.4 1248.8 1160.0 1261.7 1166.7 1270 C1173.4 1278.3 1174.4 1283.8 1173.3 1293.3 C1172.2 1302.8 1166.7 1315.6 1160 1326.7 C1153.3 1337.8 1143.3 1351.1 1133.3 1360 C1123.3 1368.9 1105.5 1376.7 1100 1380"/>
<path d="M1533.3 1260 C1537.8 1264.5 1550.0 1278.9 1560 1286.7 C1570.0 1294.5 1586.1 1300.0 1593.3 1306.7 C1600.5 1313.4 1601.6 1323.4 1603.3 1326.7"/>
<path d="M1393.3 1366.7 C1400.0 1360.0 1421.1 1334.5 1433.3 1326.7 C1445.5 1318.9 1450.0 1322.8 1466.7 1320 C1483.4 1317.2 1516.6 1314.5 1533.3 1310 C1550.0 1305.5 1561.1 1296.1 1566.7 1293.3"/>
<path d="M1300 1400 C1311.1 1396.7 1351.2 1385.5 1366.7 1380 C1382.2 1374.5 1382.2 1366.7 1393.3 1366.7 C1404.4 1366.7 1418.3 1374.5 1433.3 1380 C1448.3 1385.5 1475.0 1396.7 1483.3 1400"/>
<path d="M1100 1336.7 C1105.5 1340.6 1119.4 1349.5 1133.3 1360 C1147.2 1370.5 1175.0 1393.3 1183.3 1400"/>
<path d="M1216.7 1293.3 C1218.4 1301.6 1223.9 1325.5 1226.7 1343.3 C1229.5 1361.1 1232.2 1390.5 1233.3 1400"/>
<path d="M1316.7 1283.3 C1313.9 1290.5 1305.0 1313.9 1300 1326.7 C1295.0 1339.5 1288.9 1354.5 1286.7 1360"/>
<path d="M1047.5 732.5 C1052.1 732.1 1071.2 723.8 1075 730 C1078.8 736.2 1072.9 758.3 1070 770 C1067.1 781.7 1060.8 789.6 1057.5 800 C1054.2 810.4 1051.2 827.1 1050 832.5"/>
<path d="M972.5 810 C980.8 806.7 1008.8 791.7 1022.5 790 C1036.2 788.3 1049.6 798.3 1055 800"/>
<path d="M1007.5 840 C1009.6 843.3 1008.8 855.0 1020 860 C1031.2 865.0 1055.4 870.4 1075 870 C1094.6 869.6 1123.8 861.7 1137.5 857.5 C1151.2 853.3 1154.2 847.1 1157.5 845"/>
<path d="M1020 860 C1018.3 865.8 1011.9 880.8 1010 895 C1008.1 909.2 1010.5 928.3 1008.8 945 C1007.1 961.7 1001.5 986.7 1000 995"/>
<path d="M1137.5 857.5 C1137.9 863.8 1144.2 884.6 1140 895 C1135.8 905.4 1117.1 915.8 1112.5 920"/>
<path d="M1075 870 C1070.8 874.2 1058.3 886.7 1050 895 C1041.7 903.3 1031.9 911.7 1025 920 C1018.1 928.3 1011.5 940.8 1008.8 945"/>
<path d="M925 832.5 C925.8 838.8 927.5 857.5 930 870 C932.5 882.5 936.7 895.8 940 907.5 C943.3 919.2 948.3 934.6 950 940"/>
<path d="M965 895 C970.8 892.1 990.8 883.3 1000 877.5 C1009.2 871.7 1016.7 862.9 1020 860"/>
<path d="M915 1005 C920.8 1005.0 941.7 1004.6 950 1005 C958.3 1005.4 962.5 1007.1 965 1007.5"/>
<path d="M812.5 920 C813.3 924.2 816.2 934.6 817.5 945 C818.8 955.4 818.8 970.0 820 982.5 C821.2 995.0 823.8 1010.4 825 1020 C826.2 1029.6 827.1 1036.7 827.5 1040"/>
<path d="M855 895 C857.5 899.2 865.8 909.6 870 920 C874.2 930.4 878.3 951.2 880 957.5"/>
<path d="M782.5 942.5 C785.4 947.1 793.8 963.3 800 970 C806.2 976.7 816.7 980.4 820 982.5"/>
<path d="M827.5 1040 C831.2 1038.8 842.1 1037.9 850 1032.5 C857.9 1027.1 865.4 1013.8 875 1007.5 C884.6 1001.2 902.1 997.1 907.5 995"/>
<path d="M705 967.5 C705.8 972.9 710.0 989.6 710 1000 C710.0 1010.4 705.4 1017.5 705 1030 C704.6 1042.5 706.2 1062.5 707.5 1075 C708.8 1087.5 711.7 1100.0 712.5 1105"/>
<path d="M675 1200 C677.1 1204.2 679.2 1220.0 687.5 1225 C695.8 1230.0 712.5 1230.0 725 1230 C737.5 1230.0 756.2 1225.8 762.5 1225"/>
<path d="M550 1087.5 C550.8 1093.8 552.5 1112.5 555 1125 C557.5 1137.5 560.8 1150.0 565 1162.5 C569.2 1175.0 576.2 1186.2 580 1200 C583.8 1213.8 586.2 1237.5 587.5 1245"/>
<path d="M615 1075 C615.8 1081.2 615.8 1102.1 620 1112.5 C624.2 1122.9 632.9 1129.2 640 1137.5 C647.1 1145.8 658.8 1158.3 662.5 1162.5"/>
<path d="M870 1075 C870.8 1079.2 876.2 1091.7 875 1100 C873.8 1108.3 866.7 1117.5 862.5 1125 C858.3 1132.5 852.1 1141.7 850 1145"/>
<path d="M945 1030 C950.0 1033.3 967.9 1040.4 975 1050 C982.1 1059.6 987.5 1075.0 987.5 1087.5 C987.5 1100.0 981.2 1114.6 975 1125 C968.8 1135.4 954.2 1145.8 950 1150"/>
<path d="M905 1045 C908.3 1050.0 918.3 1065.8 925 1075 C931.7 1084.2 938.8 1091.7 945 1100 C951.2 1108.3 959.6 1120.8 962.5 1125"/>
<path d="M985 1000 C985.8 1005.4 985.4 1024.2 990 1032.5 C994.6 1040.8 1006.7 1042.9 1012.5 1050 C1018.3 1057.1 1022.9 1070.8 1025 1075"/>
<path d="M955 1062.5 C958.3 1067.9 972.1 1083.8 975 1095 C977.9 1106.2 975.0 1118.8 972.5 1130 C970.0 1141.2 963.8 1155.0 960 1162.5 C956.2 1170.0 951.7 1172.9 950 1175"/>
<path d="M870 1100 C875.0 1097.9 890.0 1091.7 900 1087.5 C910.0 1083.3 920.8 1079.2 930 1075 C939.2 1070.8 950.8 1064.6 955 1062.5"/>
<path d="M935 1175 C941.7 1171.7 962.1 1160.0 975 1155 C987.9 1150.0 1002.9 1145.8 1012.5 1145 C1022.1 1144.2 1029.2 1149.2 1032.5 1150"/>
<path d="M972.5 1110 C977.1 1109.2 991.2 1107.5 1000 1105 C1008.8 1102.5 1016.7 1098.8 1025 1095 C1033.3 1091.2 1045.8 1084.6 1050 1082.5"/>
<path d="M950 1250 C954.2 1252.1 965.4 1262.5 975 1262.5 C984.6 1262.5 999.2 1256.2 1007.5 1250 C1015.8 1243.8 1017.9 1231.2 1025 1225 C1032.1 1218.8 1041.7 1215.4 1050 1212.5 C1058.3 1209.6 1070.8 1208.3 1075 1207.5"/>
<path d="M1007.5 1250 C1010.4 1254.2 1017.9 1266.7 1025 1275 C1032.1 1283.3 1041.7 1291.7 1050 1300 C1058.3 1308.3 1070.8 1320.8 1075 1325"/>
<path d="M975 1262.5 C974.2 1266.7 967.9 1279.2 970 1287.5 C972.1 1295.8 985.8 1304.2 987.5 1312.5 C989.2 1320.8 982.5 1330.4 980 1337.5 C977.5 1344.6 973.8 1352.1 972.5 1355"/>
<path d="M1062.5 1255 C1065.8 1258.3 1079.2 1267.5 1082.5 1275 C1085.8 1282.5 1087.9 1295.8 1082.5 1300 C1077.1 1304.2 1055.4 1300.0 1050 1300"/>
<path d="M1025 1275 C1031.2 1271.7 1053.3 1261.2 1062.5 1255 C1071.7 1248.8 1073.8 1240.4 1080 1237.5 C1086.2 1234.6 1096.7 1237.5 1100 1237.5"/>
<path d="M940 1312.5 C945.8 1310.4 963.8 1301.7 975 1300 C986.2 1298.3 1002.1 1302.1 1007.5 1302.5"/>
<path d="M812.5 1225 C810.4 1233.3 802.9 1260.4 800 1275 C797.1 1289.6 795.0 1300.0 795 1312.5 C795.0 1325.0 796.7 1340.0 800 1350 C803.3 1360.0 812.5 1368.8 815 1372.5"/>
<path d="M850 1375 C854.2 1366.7 868.3 1334.6 875 1325 C881.7 1315.4 887.5 1318.8 890 1317.5"/>
<path d="M837.5 1325 C841.7 1328.3 854.2 1338.8 862.5 1345 C870.8 1351.2 879.2 1356.7 887.5 1362.5 C895.8 1368.3 908.3 1377.1 912.5 1380"/>
<path d="M800 1275 C795.8 1277.5 780.8 1285.0 775 1290 C769.2 1295.0 766.7 1302.5 765 1305"/>
<path d="M610 1280 C616.7 1281.7 636.7 1289.2 650 1290 C663.3 1290.8 677.5 1287.5 690 1285 C702.5 1282.5 719.2 1276.7 725 1275"/>
<path d="M675 1320 C675.8 1315.0 676.7 1299.6 680 1290 C683.3 1280.4 689.6 1269.2 695 1262.5 C700.4 1255.8 709.6 1252.1 712.5 1250"/>
<path d="M575 1345 C581.2 1345.8 600.0 1347.5 612.5 1350 C625.0 1352.5 639.6 1357.5 650 1360 C660.4 1362.5 670.8 1364.2 675 1365"/>
<path d="M712.5 1372.5 C714.6 1367.9 720.8 1352.9 725 1345 C729.2 1337.1 731.2 1330.4 737.5 1325 C743.8 1319.6 758.3 1314.6 762.5 1312.5"/>
<path d="M400 885 C402.8 884.5 411.1 881.7 416.7 881.7 C422.2 881.7 426.9 885.6 433.3 885 C439.7 884.4 451.4 879.4 455 878.3"/>
<path d="M416.7 840 C417.5 842.8 421.7 849.8 421.7 856.7 C421.7 863.7 417.5 877.5 416.7 881.7"/>
<path d="M400 920 C404.2 919.7 416.7 918.8 425 918.3 C433.3 917.8 443.1 918.1 450 916.7 C456.9 915.3 461.1 912.8 466.7 910 C472.2 907.2 477.2 902.5 483.3 900 C489.4 897.5 496.4 897.2 503.3 895 C510.2 892.8 518.6 889.5 525 886.7 C531.4 883.9 534.8 881.1 541.7 878.3 C548.7 875.5 558.4 872.8 566.7 870 C575.0 867.2 587.5 863.1 591.7 861.7"/>
<path d="M450 916.7 C453.3 918.9 463.3 926.1 470 930 C476.7 933.9 485.0 937.2 490 940 C495.0 942.8 498.3 945.6 500 946.7"/>
<path d="M480 966.7 C481.1 964.5 483.4 956.6 486.7 953.3 C490.0 950.0 495.0 950.6 500 946.7 C505.0 942.8 511.2 935.0 516.7 930 C522.2 925.0 527.8 920.0 533.3 916.7 C538.8 913.4 547.2 911.1 550 910"/>
<path d="M503.3 895 C505.5 897.0 511.7 903.1 516.7 906.7 C521.7 910.3 530.5 915.0 533.3 916.7"/>
<path d="M548.3 873.3 C548.6 878.9 549.4 895.6 550 906.7 C550.6 917.8 551.2 931.7 551.7 940 C552.2 948.3 551.9 951.2 553.3 956.7 C554.7 962.2 557.8 969.1 560 973.3 C562.2 977.5 565.6 980.3 566.7 981.7"/>
<path d="M551.7 933.3 C555.6 933.3 567.0 932.2 575 933.3 C583.0 934.4 593.0 937.8 600 940 C607.0 942.2 613.9 945.6 616.7 946.7"/>
<path d="M550 910 C552.8 908.9 561.2 903.8 566.7 903.3 C572.2 902.8 577.8 906.1 583.3 906.7 C588.8 907.3 591.7 906.7 600 906.7 C608.3 906.7 622.2 906.2 633.3 906.7 C644.4 907.2 655.6 910.0 666.7 910 C677.8 910.0 688.9 907.8 700 906.7 C711.1 905.6 723.3 903.6 733.3 903.3 C743.3 903.0 755.5 904.7 760 905"/>
<path d="M591.7 861.7 C594.5 860.9 601.4 858.7 608.3 856.7 C615.2 854.8 623.6 852.0 633.3 850 C643.0 848.0 655.6 846.7 666.7 845 C677.8 843.3 694.5 840.8 700 840"/>
<path d="M605 946.7 C603.6 949.5 600.3 958.9 596.7 963.3 C593.1 967.7 587.8 970.2 583.3 973.3 C578.8 976.4 572.2 980.3 570 981.7"/>
<path d="M616.7 946.7 C619.5 946.7 627.8 947.3 633.3 946.7 C638.8 946.1 647.2 943.9 650 943.3"/>
<path d="M666.7 910 C666.1 912.2 666.1 917.8 663.3 923.3 C660.5 928.8 655.0 936.6 650 943.3 C645.0 950.0 638.8 957.7 633.3 963.3 C627.8 968.9 622.2 973.6 616.7 976.7 C611.2 979.8 602.8 980.9 600 981.7"/>
<path d="M708.3 865 C704.1 867.8 689.7 876.4 683.3 881.7 C676.9 887.0 672.8 892.0 670 896.7 C667.2 901.4 667.2 907.8 666.7 910"/>
<path d="M400 986.7 C402.8 988.9 411.1 997.2 416.7 1000 C422.2 1002.8 427.8 1002.5 433.3 1003.3 C438.9 1004.1 445.8 1001.7 450 1005 C454.2 1008.3 457.2 1016.1 458.3 1023.3 C459.4 1030.5 456.7 1040.0 456.7 1048.3 C456.7 1056.6 456.6 1066.3 458.3 1073.3 C460.0 1080.2 463.9 1083.9 466.7 1090 C469.5 1096.1 473.6 1106.7 475 1110"/>
<path d="M450 1005 C452.8 1001.1 461.7 988.1 466.7 981.7 C471.7 975.3 477.8 969.2 480 966.7"/>
<path d="M456.7 1048.3 C461.1 1046.9 474.7 1041.9 483.3 1040 C491.9 1038.1 501.4 1037.5 508.3 1036.7 C515.2 1035.9 522.2 1035.3 525 1035"/>
<path d="M458.3 1073.3 C462.5 1071.4 475.0 1064.5 483.3 1061.7 C491.6 1058.9 501.1 1057.8 508.3 1056.7 C515.5 1055.6 523.6 1055.3 526.7 1055"/>
<path d="M400 1070 C404.2 1069.7 415.3 1067.8 425 1068.3 C434.7 1068.8 452.8 1072.5 458.3 1073.3"/>
<path d="M700 923.3 C700.3 927.5 700.9 937.2 701.7 948.3 C702.5 959.4 704.7 977.5 705 990 C705.3 1002.5 703.3 1012.2 703.3 1023.3 C703.3 1034.4 704.2 1047.0 705 1056.7 C705.8 1066.4 707.8 1077.5 708.3 1081.7"/>
<path d="M433.3 885 C434.1 888.6 435.5 901.4 438.3 906.7 C441.1 912.0 448.1 915.0 450 916.7"/>
<path d="M591.7 861.7 C590.3 865.0 587.5 876.2 583.3 881.7 C579.1 887.2 572.2 890.3 566.7 895 C561.2 899.7 552.8 907.5 550 910"/>
<path d="M1100 1220 C1106.7 1216.1 1123.3 1203.4 1140 1196.7 C1156.7 1190.0 1181.7 1184.5 1200 1180 C1218.3 1175.5 1230.5 1175.0 1250 1170 C1269.5 1165.0 1294.5 1159.5 1316.7 1150 C1338.9 1140.5 1363.9 1121.6 1383.3 1113.3 C1402.7 1105.0 1413.8 1102.2 1433.3 1100 C1452.8 1097.8 1477.8 1096.7 1500 1100 C1522.2 1103.3 1549.5 1114.5 1566.7 1120 C1583.9 1125.5 1597.2 1131.1 1603.3 1133.3"/>
<path d="M900 1047.5 C904.2 1038.8 916.7 1012.9 925 995 C933.3 977.1 943.3 956.7 950 940 C956.7 923.3 961.2 910.8 965 895 C968.8 879.2 970.8 859.2 972.5 845 C974.2 830.8 971.2 818.3 975 810 C978.8 801.7 987.1 798.3 995 795 C1002.9 791.7 1017.9 790.8 1022.5 790"/>
<path d="M812.5 1125 C814.2 1116.7 820.4 1091.7 822.5 1075 C824.6 1058.3 825.4 1041.7 825 1025 C824.6 1008.3 822.1 991.7 820 975 C817.9 958.3 814.2 937.5 812.5 925 C810.8 912.5 810.4 904.2 810 900"/>
<path d="M812.5 1225 C814.6 1233.3 820.8 1258.3 825 1275 C829.2 1291.7 833.3 1308.3 837.5 1325 C841.7 1341.7 847.1 1358.3 850 1375 C852.9 1391.7 855.8 1408.3 855 1425 C854.2 1441.7 848.8 1460.4 845 1475 C841.2 1489.6 835.8 1499.0 832.5 1512.5 C829.2 1526.0 826.2 1548.9 825 1556.2"/>
<path d="M812.5 1225 C806.2 1230.0 785.4 1244.2 775 1255 C764.6 1265.8 758.3 1278.3 750 1290 C741.7 1301.7 733.3 1315.0 725 1325 C716.7 1335.0 708.3 1343.3 700 1350 C691.7 1356.7 679.2 1362.5 675 1365"/>
</g>
<g stroke="#d0d0d0" stroke-width="2.9">
<path d="M123.3 355 C132.8 369.7 162.8 423.0 180 443.3 C197.2 463.6 213.4 460.0 226.7 476.7 C240.0 493.4 250.0 524.4 260 543.3 C270.0 562.2 278.9 574.4 286.7 590 C294.5 605.6 299.5 622.2 306.7 636.7 C313.9 651.2 322.2 665.6 330 676.7 C337.8 687.8 346.1 692.8 353.3 703.3 C360.5 713.8 360.0 729.4 373.3 740 C386.6 750.6 417.7 756.7 433.3 766.7 C448.9 776.7 461.1 794.5 466.7 800"/>
<path d="M443.3 426.7 C435.0 428.9 407.2 434.4 393.3 440 C379.4 445.6 370.0 451.7 360 460 C350.0 468.3 344.4 481.1 333.3 490 C322.2 498.9 305.5 504.4 293.3 513.3 C281.1 522.2 270.0 531.6 260 543.3 C250.0 555.0 239.7 571.1 233.3 583.3 C226.9 595.5 224.2 600.0 221.7 616.7 C219.2 633.4 218.3 666.6 218.3 683.3 C218.3 700.0 222.5 705.6 221.7 716.7 C220.9 727.8 215.8 736.1 213.3 750 C210.8 763.9 208.9 783.3 206.7 800 C204.5 816.7 202.2 835.0 200 850 C197.8 865.0 194.4 883.3 193.3 890"/>
<path d="M826.7 355 C825.9 361.4 821.7 381.4 821.7 393.3 C821.7 405.2 823.1 414.5 826.7 426.7 C830.3 438.9 839.4 452.8 843.3 466.7 C847.2 480.6 849.2 498.3 850 510 C850.8 521.7 846.6 525.6 848.3 536.7 C850.0 547.8 856.4 563.4 860 576.7 C863.6 590.0 865.5 607.3 870 616.7 C874.5 626.1 879.5 626.6 886.7 633.3 C893.9 640.0 907.8 651.1 913.3 656.7 C918.8 662.3 917.8 662.3 920 666.7 C922.2 671.1 923.4 675.0 926.7 683.3 C930.0 691.6 935.6 705.6 940 716.7 C944.4 727.8 948.8 738.9 953.3 750 C957.8 761.1 964.5 777.8 966.7 783.3"/>
<path d="M110 1196.7 C122.2 1199.5 157.2 1214.4 183.3 1213.3 C209.4 1212.2 241.7 1196.1 266.7 1190 C291.7 1183.9 311.1 1182.8 333.3 1176.7 C355.5 1170.6 376.1 1160.2 400 1153.3 C423.9 1146.3 456.1 1138.3 476.7 1135 C497.2 1131.7 511.1 1132.5 523.3 1133.3 C535.5 1134.1 537.2 1137.2 550 1140 C562.8 1142.8 583.3 1144.2 600 1150 C616.7 1155.8 633.3 1167.5 650 1175 C666.7 1182.5 683.3 1189.2 700 1195 C716.7 1200.8 735.4 1205.8 750 1210 C764.6 1214.2 781.2 1218.3 787.5 1220"/>
<path d="M63.3 1300 C66.6 1304.5 75.5 1317.2 83.3 1326.7 C91.1 1336.2 102.8 1346.2 110 1356.7 C117.2 1367.2 120.0 1378.9 126.7 1390 C133.4 1401.1 140.6 1414.4 150 1423.3 C159.4 1432.2 173.9 1439.4 183.3 1443.3 C192.8 1447.2 192.8 1445.6 206.7 1446.7 C220.6 1447.8 251.1 1451.1 266.7 1450 C282.2 1448.9 290.0 1445.0 300 1440 C310.0 1435.0 315.6 1425.5 326.7 1420 C337.8 1414.5 354.5 1411.2 366.7 1406.7 C378.9 1402.2 386.1 1398.9 400 1393.3 C413.9 1387.7 436.1 1378.3 450 1373.3 C463.9 1368.3 469.4 1365.8 483.3 1363.3 C497.2 1360.8 525.0 1359.1 533.3 1358.3"/>
<path d="M206.7 1446.7 C210.0 1451.7 218.9 1466.7 226.7 1476.7 C234.5 1486.7 243.9 1496.7 253.3 1506.7 C262.7 1516.7 275.5 1528.9 283.3 1536.7 C291.1 1544.5 297.2 1550.5 300 1553.3"/>
<path d="M333.3 1400 C344.4 1398.3 377.8 1395.0 400 1390 C422.2 1385.0 446.7 1375.0 466.7 1370 C486.7 1365.0 506.1 1361.7 520 1360 C533.9 1358.3 545.0 1360.0 550 1360"/>
<path d="M1006.7 1256.7 C1014.5 1255.0 1037.2 1248.9 1053.3 1246.7 C1069.4 1244.5 1086.6 1243.9 1103.3 1243.3 C1120.0 1242.7 1136.6 1239.4 1153.3 1243.3 C1170.0 1247.2 1188.8 1261.1 1203.3 1266.7 C1217.8 1272.3 1226.1 1274.5 1240 1276.7 C1253.9 1278.9 1267.8 1280.6 1286.7 1280 C1305.6 1279.4 1327.8 1274.4 1353.3 1273.3 C1378.8 1272.2 1425.5 1273.3 1440 1273.3 C1454.5 1273.3 1428.9 1275.5 1440 1273.3 C1451.1 1271.1 1480.0 1264.4 1506.7 1260 C1533.4 1255.6 1584.5 1248.9 1600 1246.7"/>
<path d="M1006.7 1256.7 C1014.5 1265.0 1038.3 1291.7 1053.3 1306.7 C1068.3 1321.7 1081.1 1333.4 1096.7 1346.7 C1112.3 1360.0 1131.7 1373.4 1146.7 1386.7 C1161.7 1400.0 1175.6 1415.0 1186.7 1426.7 C1197.8 1438.4 1202.2 1446.2 1213.3 1456.7 C1224.4 1467.2 1238.3 1479.5 1253.3 1490 C1268.3 1500.5 1295.0 1515.0 1303.3 1520"/>
<path d="M1440 1563.3 C1451.1 1562.8 1484.5 1561.7 1506.7 1560 C1528.9 1558.3 1554.4 1555.8 1573.3 1553.3 C1592.2 1550.8 1608.9 1551.7 1620 1545 C1631.1 1538.3 1634.5 1523.6 1640 1513.3 C1645.5 1503.0 1645.0 1493.3 1653.3 1483.3 C1661.6 1473.3 1678.3 1461.6 1690 1453.3 C1701.7 1445.0 1709.4 1441.6 1723.3 1433.3 C1737.2 1425.0 1757.7 1413.3 1773.3 1403.3 C1788.9 1393.3 1805.6 1381.6 1816.7 1373.3 C1827.8 1365.0 1836.1 1356.6 1840 1353.3"/>
<path d="M1223.3 1273.3 C1230.5 1274.7 1251.1 1280.0 1266.7 1281.7 C1282.3 1283.4 1300.0 1285.2 1316.7 1283.3 C1333.4 1281.3 1347.3 1271.7 1366.7 1270 C1386.1 1268.3 1411.1 1275.0 1433.3 1273.3 C1455.5 1271.6 1477.8 1263.9 1500 1260 C1522.2 1256.1 1549.5 1252.2 1566.7 1250 C1583.9 1247.8 1597.2 1247.2 1603.3 1246.7"/>
</g>
<g stroke="#d2d2d2" stroke-width="3.6">
<path d="M1193.3 1621.7 C1194.4 1614.8 1195.5 1591.4 1200 1580 C1204.5 1568.6 1210.0 1561.1 1220 1553.3 C1230.0 1545.5 1243.3 1538.3 1260 1533.3 C1276.7 1528.3 1301.7 1525.0 1320 1523.3 C1338.3 1521.6 1356.1 1520.5 1370 1523.3 C1383.9 1526.1 1391.6 1535.0 1403.3 1540 C1415.0 1545.0 1433.9 1551.1 1440 1553.3"/>
<path d="M933.3 1496.7 C936.6 1505.0 947.7 1532.8 953.3 1546.7 C958.9 1560.6 963.4 1567.5 966.7 1580 C970.0 1592.5 972.2 1614.8 973.3 1621.7"/>
</g>
<g stroke="#d4d4d4" stroke-width="5.5">
<path d="M500 351.7 C494.4 357.5 476.7 373.1 466.7 386.7 C456.7 400.3 448.3 416.1 440 433.3 C431.7 450.5 421.7 470.6 416.7 490 C411.7 509.4 410.0 531.1 410 550 C410.0 568.9 412.8 588.3 416.7 603.3 C420.6 618.3 427.8 629.4 433.3 640 C438.9 650.6 446.1 653.9 450 666.7 C453.9 679.5 454.8 697.3 456.7 716.7 C458.6 736.1 460.1 765.0 461.7 783.3 C463.2 801.6 466.3 813.9 466 826.7 C465.7 839.5 460.4 851.1 460 860 C459.6 868.9 460.5 871.7 463.3 880 C466.1 888.3 470.6 901.1 476.7 910 C482.8 918.9 491.7 926.6 500 933.3 C508.3 940.0 515.6 945.5 526.7 950 C537.8 954.5 554.5 956.1 566.7 960 C578.9 963.9 590.6 967.8 600 973.3 C609.4 978.8 619.1 988.8 623.3 993.3 C627.5 997.8 622.2 993.9 625 1000 C627.8 1006.1 631.7 1020.0 640 1030 C648.3 1040.0 662.9 1051.7 675 1060 C687.1 1068.3 702.1 1073.3 712.5 1080 C722.9 1086.7 731.2 1092.5 737.5 1100 C743.8 1107.5 745.8 1116.7 750 1125 C754.2 1133.3 758.3 1141.7 762.5 1150 C766.7 1158.3 768.8 1164.6 775 1175 C781.2 1185.4 791.7 1200.0 800 1212.5 C808.3 1225.0 816.7 1238.8 825 1250 C833.3 1261.2 836.4 1265.0 850 1280 C863.6 1295.0 895.0 1324.5 906.7 1340 C918.4 1355.5 916.7 1363.3 920 1373.3 C923.3 1383.3 925.3 1387.8 926.7 1400 C928.1 1412.2 926.6 1430.6 928.3 1446.7 C930.0 1462.8 934.8 1480.0 936.7 1496.7 C938.7 1513.4 937.2 1532.8 940 1546.7 C942.8 1560.6 950.0 1567.5 953.3 1580 C956.6 1592.5 958.9 1614.8 960 1621.7"/>
</g>
<g stroke="#8c8c8c" stroke-width="1.1">
<path d="M626.7 351.7 C628.6 354.8 636.4 361.9 638.3 370 C640.2 378.1 640.2 382.2 638.3 400 C636.4 417.8 631.4 451.7 626.7 476.7 C622.0 501.7 614.5 526.7 610 550 C605.5 573.3 603.9 595.6 600 616.7 C596.1 637.8 592.2 658.4 586.7 676.7 C581.2 695.0 572.8 712.3 566.7 726.7 C560.6 741.1 555.6 753.9 550 763.3 C544.4 772.7 538.6 777.7 533.3 783.3 C528.0 788.9 520.8 790.6 518.3 796.7 C515.8 802.8 520.2 812.2 518.3 820 C516.4 827.8 513.1 835.0 506.7 843.3 C500.3 851.6 488.1 862.8 480 870 C471.9 877.2 462.8 882.2 458.3 886.7 C453.9 891.2 455.0 892.3 453.3 896.7 C451.6 901.1 448.3 906.1 448.3 913.3 C448.3 920.5 449.1 932.2 453.3 940 C457.5 947.8 464.4 954.5 473.3 960 C482.2 965.5 493.9 969.4 506.7 973.3 C519.5 977.2 538.9 981.1 550 983.3 C561.1 985.5 563.3 986.8 573.3 986.7 C583.3 986.6 600.5 979.5 610 982.5 C619.5 985.5 623.3 996.2 630 1005 C636.7 1013.8 640.8 1025.0 650 1035 C659.2 1045.0 672.5 1055.8 685 1065 C697.5 1074.2 714.6 1080.8 725 1090 C735.4 1099.2 740.8 1110.0 747.5 1120 C754.2 1130.0 759.6 1140.0 765 1150 C770.4 1160.0 775.8 1171.7 780 1180 C784.2 1188.3 786.7 1193.3 790 1200 C793.3 1206.7 798.3 1216.7 800 1220"/>
<path d="M0 1240 C4.5 1239.2 18.4 1234.5 26.7 1235 C35.0 1235.5 43.6 1239.1 50 1243.3 C56.4 1247.5 62.8 1252.8 65 1260 C67.2 1267.2 61.9 1277.8 63.3 1286.7 C64.7 1295.6 67.7 1303.9 73.3 1313.3 C78.9 1322.7 90.6 1333.3 96.7 1343.3 C102.8 1353.3 105.0 1362.2 110 1373.3 C115.0 1384.4 121.2 1399.4 126.7 1410 C132.2 1420.6 136.6 1429.5 143.3 1436.7 C150.0 1443.9 157.2 1449.4 166.7 1453.3 C176.1 1457.2 186.7 1458.3 200 1460 C213.3 1461.7 232.2 1463.0 246.7 1463.3 C261.1 1463.6 277.8 1463.9 286.7 1461.7 C295.6 1459.5 295.0 1455.3 300 1450 C305.0 1444.7 308.4 1435.5 316.7 1430 C325.0 1424.5 338.9 1420.3 350 1416.7 C361.1 1413.1 372.2 1411.6 383.3 1408.3 C394.4 1405.0 405.6 1401.4 416.7 1396.7 C427.8 1392.0 438.9 1385.0 450 1380 C461.1 1375.0 472.2 1369.8 483.3 1366.7 C494.4 1363.7 505.6 1362.8 516.7 1361.7 C527.8 1360.6 540.3 1361.1 550 1360 C559.7 1358.9 565.8 1355.4 575 1355 C584.2 1354.6 594.2 1355.8 605 1357.5 C615.8 1359.2 630.8 1359.6 640 1365 C649.2 1370.4 656.7 1385.8 660 1390"/>
<path d="M660 1390 C660.8 1392.9 662.5 1400.8 665 1407.5 C667.5 1414.2 670.8 1423.8 675 1430 C679.2 1436.2 683.8 1441.2 690 1445 C696.2 1448.8 702.5 1450.8 712.5 1452.5 C722.5 1454.2 737.5 1453.3 750 1455 C762.5 1456.7 777.1 1459.2 787.5 1462.5 C797.9 1465.8 804.2 1469.6 812.5 1475 C820.8 1480.4 829.2 1488.8 837.5 1495 C845.8 1501.2 856.2 1506.2 862.5 1512.5 C868.8 1518.8 871.7 1525.2 875 1532.5 C878.3 1539.8 881.2 1552.2 882.5 1556.2"/>
<path d="M660 1390 C662.5 1387.5 668.3 1382.5 675 1375 C681.7 1367.5 691.7 1355.8 700 1345 C708.3 1334.2 716.7 1322.5 725 1310 C733.3 1297.5 741.7 1280.8 750 1270 C758.3 1259.2 766.7 1251.7 775 1245 C783.3 1238.3 791.7 1233.3 800 1230 C808.3 1226.7 820.8 1225.8 825 1225"/>
<path d="M1440 1390 C1433.9 1389.5 1413.3 1388.4 1403.3 1386.7 C1393.3 1385.0 1386.1 1378.9 1380 1380 C1373.9 1381.1 1371.2 1387.8 1366.7 1393.3 C1362.2 1398.8 1359.4 1406.6 1353.3 1413.3 C1347.2 1420.0 1338.3 1428.3 1330 1433.3 C1321.7 1438.3 1313.3 1438.8 1303.3 1443.3 C1293.3 1447.8 1280.5 1455.0 1270 1460 C1259.5 1465.0 1247.2 1470.5 1240 1473.3 C1232.8 1476.1 1231.7 1478.4 1226.7 1476.7 C1221.7 1475.0 1215.0 1466.1 1210 1463.3 C1205.0 1460.5 1201.2 1457.2 1196.7 1460 C1192.2 1462.8 1187.8 1471.1 1183.3 1480 C1178.8 1488.9 1173.9 1502.2 1170 1513.3 C1166.1 1524.4 1159.5 1538.9 1160 1546.7 C1160.5 1554.5 1169.4 1554.5 1173.3 1560 C1177.2 1565.5 1182.7 1572.8 1183.3 1580 C1183.9 1587.2 1179.5 1596.3 1176.7 1603.3 C1173.9 1610.2 1168.4 1618.6 1166.7 1621.7"/>
<path d="M1440 1391.7 C1444.5 1392.0 1458.4 1390.5 1466.7 1393.3 C1475.0 1396.1 1483.3 1404.7 1490 1408.3 C1496.7 1411.9 1499.5 1415.0 1506.7 1415 C1513.9 1415.0 1526.1 1408.0 1533.3 1408.3 C1540.5 1408.6 1543.3 1413.4 1550 1416.7 C1556.7 1420.0 1565.0 1425.0 1573.3 1428.3 C1581.6 1431.6 1590.5 1433.1 1600 1436.7 C1609.5 1440.3 1617.8 1448.3 1630 1450 C1642.2 1451.7 1657.8 1449.2 1673.3 1446.7 C1688.8 1444.2 1712.2 1440.0 1723.3 1435 C1734.4 1430.0 1734.4 1423.1 1740 1416.7 C1745.6 1410.3 1748.4 1402.8 1756.7 1396.7 C1765.0 1390.6 1778.9 1386.1 1790 1380 C1801.1 1373.9 1815.2 1366.1 1823.3 1360 C1831.3 1353.9 1835.8 1351.6 1838.3 1343.3 C1840.8 1335.0 1836.3 1317.2 1838.3 1310 C1840.2 1302.8 1848.0 1301.7 1850 1300"/>
<path d="M1112.5 1198.8 C1118.8 1199.0 1139.6 1199.3 1150 1200 C1160.4 1200.7 1170.8 1202.5 1175 1203"/>
<path d="M753.3 796.7 C750.7 797.1 742.6 796.7 737.8 798.9 C733.0 801.1 727.0 805.9 724.4 810 C721.8 814.1 721.1 816.6 722.2 823.3 C723.3 830.0 730.4 841.9 731.1 850 C731.9 858.1 728.9 864.1 726.7 872.2 C724.5 880.4 723.4 892.2 717.8 898.9 C712.2 905.6 700.3 908.5 693.3 912.2 C686.3 915.9 681.5 917.0 675.6 921.1 C669.7 925.2 664.5 930.0 657.8 936.7 C651.1 943.4 643.8 954.1 635.6 961.1 C627.5 968.1 617.4 975.2 608.9 978.9 C600.4 982.6 591.2 981.8 584.4 983.3 C577.5 984.8 570.8 985.4 567.8 987.8 C564.8 990.2 566.9 996.1 566.7 997.8"/>
</g>
</g>
<path d="M2098 1204L2160 1186M2096 1285H2160" fill="none" stroke="#b9c4cc" stroke-width="1.6" stroke-dasharray="7 6"/>
<g stroke="#fff" stroke-width="2.2" stroke-opacity=".75" paint-order="stroke" fill-opacity=".9">
<text x="107" y="403" font-size="20.5" font-weight="400" fill="#9b9b9b" letter-spacing="0.72">Hornum</text>
<text x="323" y="385" font-size="20.5" font-weight="400" fill="#9b9b9b" letter-spacing="0.72">Suldrup</text>
<text x="232" y="488" font-size="25.0" font-weight="400" fill="#8f8f8f" letter-spacing="0.88">Aars</text>
<text x="0" y="560" font-size="22.4" font-weight="400" fill="#8f8f8f" letter-spacing="0.78">Farsø</text>
<text x="345" y="682" font-size="20.0" font-weight="400" fill="#9b9b9b" letter-spacing="0.7">Nørager</text>
<text x="64" y="710" font-size="20" font-weight="400" fill="#9b9b9b" letter-spacing="0.7" text-anchor="end">Gedsted</text>
<text x="99" y="748" font-size="22.5" font-weight="400" fill="#8f8f8f" letter-spacing="0.79">Aalestrup</text>
<text x="625" y="578" font-size="22.6" font-weight="400" fill="#8f8f8f" letter-spacing="0.79">Arden</text>
<text x="612" y="767" font-size="19.8" font-weight="400" fill="#9b9b9b" letter-spacing="0.69">Valsgård</text>
<text x="588" y="842" font-size="27.6" font-weight="400" fill="#8f8f8f" letter-spacing="0.97">Hobro</text>
<text x="195" y="893" font-size="19.9" font-weight="400" fill="#9b9b9b" letter-spacing="0.7">Møldrup</text>
<text x="661" y="369" font-size="22.9" font-weight="400" fill="#8f8f8f" letter-spacing="0.8">Skørping</text>
<text x="860" y="457" font-size="20.1" font-weight="400" fill="#9b9b9b" letter-spacing="0.7">Terndrup</text>
<text x="942" y="650" font-size="21.9" font-weight="400" fill="#8f8f8f" letter-spacing="0.77">Hadsund</text>
<text x="868" y="733" font-size="20.0" font-weight="400" fill="#9b9b9b" letter-spacing="0.7">Assens</text>
<text x="775" y="783" font-size="22.4" font-weight="400" fill="#8f8f8f" letter-spacing="0.78">Mariager</text>
<text x="1019" y="957" font-size="19.5" font-weight="400" fill="#9b9b9b" letter-spacing="0.68">Øster Tørslev</text>
<text x="844" y="1053" font-size="19.4" font-weight="400" fill="#9b9b9b" letter-spacing="0.68">Spentrup</text>
<text x="716" y="1036" font-size="17.8" font-weight="400" fill="#9b9b9b" letter-spacing="0.62">Asferg</text>
<text x="532" y="1053" font-size="20.6" font-weight="400" fill="#9b9b9b" letter-spacing="0.72">Fårup</text>
<text x="587" y="1267" font-size="19.5" font-weight="400" fill="#8f8f8f" letter-spacing="0.68">Stevnstrup</text>
<text x="984" y="1249" font-size="22.1" font-weight="400" fill="#8f8f8f" letter-spacing="0.77">Assentoft</text>
<text x="1203" y="1129" font-size="19.4" font-weight="400" fill="#9b9b9b" letter-spacing="0.68">Ørsted</text>
<text x="1212" y="1208" font-size="19.8" font-weight="400" fill="#9b9b9b" letter-spacing="0.69">Allingåbro</text>
<text x="1256" y="1267" font-size="22.4" font-weight="400" fill="#8f8f8f" letter-spacing="0.78">Auning</text>
<text x="544" y="1392" font-size="19.3" font-weight="400" fill="#9b9b9b" letter-spacing="0.68">Ulstrup</text>
<text x="706" y="1509" font-size="24.2" font-weight="400" fill="#8f8f8f" letter-spacing="0.85">Hadsten</text>
<text x="726" y="1332" font-size="19.9" font-weight="400" fill="#9b9b9b" letter-spacing="0.7">Haslund</text>
<text x="596" y="1329" font-size="20.7" font-weight="400" fill="#8f8f8f" letter-spacing="0.72">Langå</text>
<text x="82" y="1007" font-size="20.6" font-weight="400" fill="#9b9b9b" letter-spacing="0.72">Skals</text>
<text x="172" y="1077" font-size="20.2" font-weight="400" fill="#9b9b9b" letter-spacing="0.71">Vammen</text>
<text x="47.5" y="1120" font-size="20" font-weight="400" fill="#9b9b9b" letter-spacing="0.7" text-anchor="end">Løvelbæk</text>
<text x="350" y="1183" font-size="20.0" font-weight="400" fill="#9b9b9b" letter-spacing="0.7">Ørum</text>
<text x="45" y="1217" font-size="24.0" font-weight="700" fill="#808080" letter-spacing="0.84">Viborg</text>
<text x="400" y="1451" font-size="25.2" font-weight="400" fill="#8f8f8f" letter-spacing="0.88">Bjerringbro</text>
<text x="73" y="1491" font-size="20.1" font-weight="400" fill="#9b9b9b" letter-spacing="0.7">Rødkærsbro</text>
<text x="310" y="1562" font-size="20.1" font-weight="400" fill="#9b9b9b" letter-spacing="0.7">Ans</text>
<text x="553" y="1573" font-size="19.6" font-weight="400" fill="#9b9b9b" letter-spacing="0.69">Thorsø</text>
<text x="137" y="1617" font-size="24.9" font-weight="400" fill="#8f8f8f" letter-spacing="0.87">Kjellerup</text>
<text x="1043" y="1518" font-size="24.8" font-weight="400" fill="#8f8f8f" letter-spacing="0.87">Hornslet</text>
<text x="1077" y="1585" font-size="24.4" font-weight="400" fill="#8f8f8f" letter-spacing="0.85">Løgten</text>
<text x="767" y="1602" font-size="24.8" font-weight="400" fill="#8f8f8f" letter-spacing="0.87">Hinnerup</text>
<text x="1278" y="1573" font-size="22.0" font-weight="400" fill="#8f8f8f" letter-spacing="0.77">Rønde</text>
<text x="1258" y="1485" font-size="19.4" font-weight="400" fill="#9b9b9b" letter-spacing="0.68">Mørke</text>
<text x="1183" y="1503" font-size="19.7" font-weight="400" fill="#9b9b9b" letter-spacing="0.69">Løkken</text>
<text x="1353" y="1466" font-size="19.8" font-weight="400" fill="#9b9b9b" letter-spacing="0.69">Thorsager</text>
<text x="1397" y="1353" font-size="20.0" font-weight="400" fill="#9b9b9b" letter-spacing="0.7">Ryomgård</text>
<text x="1912" y="1342" font-size="27.5" font-weight="400" fill="#8f8f8f" letter-spacing="0.96">Grenaa</text>
<text x="1502" y="1447" font-size="20.0" font-weight="400" fill="#9b9b9b" letter-spacing="0.7">Kolind</text>
<text x="774" y="1184.5" font-size="30.9" font-weight="700" fill="#808080" letter-spacing="1.08" fill-opacity=".6">Randers</text>
</g>
<g stroke="#000" stroke-width="3.6" stroke-linejoin="round">
<path d="M921.2 822.5 L927.5 806.2 L942.5 805 L950 810 L965 798.8 L966.2 775 L976.2 770 L977.5 755 L993.8 750 L1011.2 736.2 L1010 725 L1022.5 730 L1082.5 693.8 L1100 693.8 L1115 702.5 L1135 696.2 L1147.5 686.2 L1186.2 685 L1202.5 702.5 L1215 772.5 L1185 773.8 L1172.5 778.8 L1140 780 L1141.2 800 L1137.5 832.5 L1078.8 810 L1070 813.8 L1066.2 822.5 L1048.8 840 L1032.5 830 L995 832.5 L987.5 857.5 L976.2 871.2 L961.2 863.8 L945 872.5 L937.5 855 L932.5 832.5 L927.5 832.5Z" fill="#677d8b" fill-opacity=".5"/>
<path d="M927.5 832.5 L920 858.8 L900 862.5 L890 867.5 L877.5 882.5 L893.8 892.5 L895 898.8 L886.2 903.8 L883.8 915 L885 945 L877.5 955 L881.2 961.2 L915 967.5 L910 985 L906.2 1030 L900 1047.5 L950 1030 L955 1020 L965 1007.5 L973.8 1003.8 L972.5 995 L962.5 991.2 L966.2 988.8 L975 995 L995 993.8 L1006.2 1003.8 L1035 987.5 L1047.5 992.5 L1057.5 1003.8 L1067.5 992.5 L1070 970 L1072.5 957.5 L1082.5 950 L1100 935 L1115 930 L1122.5 922.5 L1137.5 905 L1150 890 L1157.5 877.5 L1190 855 L1202.5 832.5 L1210 820 L1210 802.5 L1200 787.5 L1197.5 777.5 L1185 773.8 L1172.5 778.8 L1140 780 L1141.2 800 L1137.5 832.5 L1078.8 810 L1070 813.8 L1066.2 822.5 L1048.8 840 L1032.5 830 L995 832.5 L987.5 857.5 L976.2 871.2 L961.2 863.8 L945 872.5 L937.5 855 L932.5 832.5Z" fill="#878bad" fill-opacity=".5"/>
<path d="M877.5 882.5 L850 897.5 L840 907.5 L812.5 913.8 L792.5 920 L777.5 930 L782.5 941.2 L777.5 943.8 L811.2 965 L805 980 L768.8 990 L776.2 1010 L776.2 1030 L748.8 1041.2 L746.2 1055 L765 1056.2 L781.2 1058.8 L785 1065 L797.5 1085 L805 1100 L808.8 1105 L820 1102.5 L832.5 1097.5 L852.5 1085 L870 1075 L885 1067.5 L890 1065 L900 1047.5 L906.2 1030 L910 985 L915 967.5 L881.2 961.2 L877.5 955 L885 945 L883.8 915 L886.2 903.8 L895 898.8 L893.8 892.5Z" fill="#d1b5b7" fill-opacity=".5"/>
<path d="M662.5 977.5 L685 965 L721.2 953.8 L733.8 921.2 L750 923.8 L755 932.5 L777.5 926.2 L782.5 941.2 L777.5 943.8 L811.2 965 L805 980 L768.8 990 L776.2 1010 L776.2 1030 L748.8 1041.2 L746.2 1055 L735 1065 L720 1075 L717.5 1100 L695 1112.5 L676.2 1112.5 L662.5 1100 L640 1092.5 L630 1087.5 L622.5 1072.5 L622.5 1065 L660 1063.8 L672.5 1057.5 L660 1047.5 L655 1035 L642.5 1022.5 L652.5 1012.5Z" fill="#e3797f" fill-opacity=".5"/>
<path d="M520 1030 L528.8 1017.5 L536.2 1000 L547.5 998.8 L560 1005 L570 1012.5 L582.5 1022.5 L595 1015 L617.5 1010 L637.5 1010 L635 987.5 L645 971.2 L660 975 L662.5 980 L652.5 1012.5 L642.5 1022.5 L655 1035 L660 1047.5 L672.5 1057.5 L660 1063.8 L622.5 1065 L610 1062.5 L600 1075 L587.5 1080 L570 1082.5 L540 1086.2 L532.5 1085 L532.5 1062.5 L522.5 1040Z" fill="#f96991" fill-opacity=".5"/>
<path d="M532.5 1085 L540 1086.2 L570 1082.5 L587.5 1080 L600 1075 L610 1062.5 L622.5 1065 L622.5 1072.5 L630 1087.5 L640 1092.5 L662.5 1100 L676.2 1112.5 L687.5 1122.5 L695 1130 L710 1150 L715 1160 L715 1165 L710 1175 L706.2 1187.5 L700 1190 L685 1182.5 L670 1182.5 L665 1200 L663.8 1222.5 L665 1242.5 L640 1236.2 L620 1246.2 L600 1250 L597.5 1246.2 L575 1245 L560 1251.2 L545 1247.5 L525 1253.8 L517.5 1242.5 L525 1222.5 L532.5 1202.5 L526.2 1175 L530 1135 L526.2 1105 L526.2 1087.5Z" fill="#d99fad" fill-opacity=".5"/>
<path d="M746.2 1055 L765 1056.2 L781.2 1058.8 L785 1065 L797.5 1085 L805 1100 L808.8 1105 L812.5 1125 L810 1147.5 L800 1160 L795 1170 L787.5 1180 L775 1185 L752.5 1182.5 L740 1175 L720 1160 L715 1160 L710 1150 L695 1130 L687.5 1122.5 L676.2 1112.5 L695 1112.5 L717.5 1100 L720 1075 L735 1065Z" fill="#539d83" fill-opacity=".5"/>
<path d="M665 1242.5 L663.8 1222.5 L665 1200 L670 1182.5 L685 1182.5 L700 1190 L706.2 1187.5 L710 1175 L715 1165 L715 1160 L720 1160 L740 1175 L752.5 1182.5 L775 1185 L780 1190 L785 1207.5 L787.5 1221.2 L777.5 1225 L765 1237.5 L755 1248.8 L735 1240 L712.5 1241.2 L695 1243.8 L672.5 1241.2Z" fill="#91bde7" fill-opacity=".5"/>
<path d="M808.8 1105 L820 1102.5 L832.5 1097.5 L852.5 1085 L867.5 1095 L885 1105 L892.5 1122.5 L897.5 1130 L915 1132.5 L925 1150 L922.5 1165 L935 1182.5 L940 1200 L942.5 1220 L925 1212.5 L912.5 1205 L900 1202.5 L885 1205 L875 1207.5 L860 1212.5 L850 1222.5 L837.5 1225 L812.5 1222.5 L787.5 1221.2 L785 1207.5 L780 1190 L775 1185 L787.5 1180 L795 1170 L800 1160 L810 1147.5 L812.5 1125Z" fill="#abebb5" fill-opacity=".5"/>
<path d="M900 1047.5 L950 1030 L955 1020 L965 1007.5 L973.8 1003.8 L972.5 995 L962.5 991.2 L966.2 988.8 L975 995 L995 993.8 L1006.2 1003.8 L1035 987.5 L1047.5 992.5 L1057.5 1003.8 L1047.5 1015 L1042.5 1032.5 L1047.5 1055 L1052.5 1082.5 L1057.5 1117.5 L1050 1150 L1045 1175 L1046.2 1182.5 L1035 1186.2 L1015 1190 L997.5 1197.5 L975 1207.5 L955 1220 L943.8 1225 L942.5 1217.5 L943.8 1200 L935 1182.5 L922.5 1165 L925 1150 L915 1132.5 L897.5 1130 L892.5 1122.5 L885 1105 L867.5 1095 L852.5 1085 L870 1075 L885 1067.5 L890 1065Z" fill="#f5b7c1" fill-opacity=".5"/>
<path d="M943.8 1225 L955 1220 L975 1207.5 L997.5 1197.5 L1015 1190 L1035 1186.2 L1046.2 1182.5 L1052.5 1182.5 L1070 1190 L1082.5 1195 L1095 1197.5 L1111.2 1193.8 L1112.5 1200 L1106.2 1225 L1103.8 1245 L1108.8 1252.5 L1103.8 1262.5 L1105 1275 L1122.5 1290 L1135 1292.5 L1150 1290 L1156.2 1295 L1145 1297.5 L1135 1307.5 L1117.5 1315 L1110 1325 L1095 1332.5 L1090 1337.5 L1075 1330 L1065 1340 L1047.5 1350 L1040 1360 L1020 1360 L1007.5 1367.5 L990 1366.2 L975 1370 L960 1372.5 L950 1365 L932.5 1355 L940 1337.5 L942.5 1302.5 L920 1290 L917.5 1272.5 L925 1250 L930 1230Z" fill="#a9b7b5" fill-opacity=".5"/>
<path d="M837.5 1232.5 L850 1222.5 L860 1212.5 L870 1206.2 L882.5 1201.2 L900 1203.8 L915 1206.2 L925 1212.5 L942.5 1221.2 L945 1227.5 L928.8 1230 L925 1250 L920 1270 L922.5 1290 L945 1300 L942.5 1335 L936.2 1343.8 L925 1342.5 L910 1332.5 L890 1317.5 L882.5 1316.2 L867.5 1305 L855 1295 L850 1275 L842.5 1250Z" fill="#bbc75d" fill-opacity=".5"/>
<path d="M755 1248.8 L765 1237.5 L777.5 1225 L787.5 1221.2 L812.5 1222.5 L832.5 1225 L837.5 1232.5 L842.5 1250 L850 1275 L855 1295 L867.5 1305 L882.5 1316.2 L890 1317.5 L910 1332.5 L925 1342.5 L936.2 1343.8 L932.5 1355 L950 1362.5 L955 1367.5 L947.5 1382.5 L942.5 1390 L946.2 1401.2 L935 1397.5 L925 1390 L912.5 1393.8 L902.5 1408.8 L890 1400 L882.5 1393.8 L870 1382.5 L857.5 1383.8 L842.5 1385 L837.5 1367.5 L825 1366.2 L817.5 1371.2 L800 1372.5 L790 1375 L780 1362.5 L771.2 1347.5 L767.5 1325 L788.8 1312.5 L783.8 1305 L785 1280 L765 1277.5 L762.5 1267.5 L757.5 1260Z" fill="#8b9791" fill-opacity=".5"/>
<path d="M600 1250 L620 1246.2 L640 1236.2 L655 1243.8 L672.5 1241.2 L695 1243.8 L712.5 1241.2 L735 1240 L755 1248.8 L757.5 1260 L750 1267.5 L745 1275 L751.2 1285 L746.2 1297.5 L735 1307.5 L720 1315 L702.5 1320 L690 1325 L675 1320 L660 1322.5 L645 1320 L620 1318.8 L596.2 1315 L596.2 1297.5 L605 1277.5Z" fill="#9b77b9" fill-opacity=".5"/>
<path d="M543.8 1315 L555 1308.8 L575 1312.5 L577.5 1322.5 L596.2 1315 L620 1318.8 L645 1320 L660 1322.5 L675 1320 L690 1325 L702.5 1320 L720 1315 L735 1307.5 L746.2 1297.5 L751.2 1285 L745 1275 L750 1267.5 L757.5 1260 L762.5 1267.5 L765 1277.5 L785 1280 L783.8 1305 L788.8 1312.5 L767.5 1325 L771.2 1347.5 L780 1362.5 L790 1375 L775 1382.5 L762.5 1397.5 L755 1407.5 L740 1410 L730 1413.8 L717.5 1397.5 L713.8 1382.5 L712.5 1372.5 L695 1367.5 L680 1362.5 L678.8 1385 L660 1390 L645 1393.8 L632.5 1382.5 L617.5 1376.2 L605 1373.8 L592.5 1365 L585 1357.5 L565 1357.5 L552.5 1363.8 L548.8 1345 L553.8 1335 L545 1325Z" fill="#bfcda7" fill-opacity=".5"/>
<path d="M817.5 1130 L845 1125 L847.5 1152.5 L837.5 1165 L822.5 1165 L818.8 1150Z" fill="#a97161" fill-opacity=".5"/>
</g>
<g fill="#d5e6f1" stroke="#000" stroke-width="3"><ellipse cx="1170" cy="877" rx="4" ry="2.5"/><ellipse cx="1168" cy="889" rx="4" ry="2"/><ellipse cx="1187" cy="896" rx="3" ry="1.5"/><ellipse cx="1116" cy="925" rx="4" ry="3" fill="#000"/></g>
<g fill="#058444" fill-opacity=".82" stroke="#f2a11a" stroke-width="2.2">
<circle cx="576.2" cy="1047.5" r="15.3"/>
<circle cx="608.0" cy="1040.5" r="15.3"/>
<circle cx="703.8" cy="1031.8" r="15.3"/>
<circle cx="827.5" cy="1040.0" r="15.3"/>
<circle cx="585.5" cy="1127.0" r="15.3"/>
<circle cx="740.5" cy="1123.2" r="15.3"/>
<circle cx="669.5" cy="1165.5" r="15.3"/>
<circle cx="809.2" cy="1144.2" r="15.3"/>
<circle cx="849.2" cy="1146.2" r="15.3"/>
<circle cx="772.5" cy="1184.5" r="15.3"/>
<circle cx="795.0" cy="1188.8" r="15.3"/>
<circle cx="830.5" cy="1178.8" r="15.3"/>
<circle cx="846.2" cy="1186.2" r="15.3"/>
<circle cx="865.5" cy="1183.8" r="15.3"/>
<circle cx="803.8" cy="1208.0" r="15.3"/>
<circle cx="811.2" cy="1200.0" r="15.3"/>
<circle cx="828.8" cy="1203.8" r="15.3"/>
<circle cx="842.5" cy="1208.8" r="15.3"/>
<circle cx="838.8" cy="1215.5" r="15.3"/>
<circle cx="750.0" cy="1213.8" r="15.3"/>
<circle cx="892.5" cy="1238.0" r="15.3"/>
<circle cx="854.5" cy="1246.2" r="15.3"/>
<circle cx="838.0" cy="1263.8" r="15.3"/>
<circle cx="863.8" cy="1260.0" r="15.3"/>
<circle cx="872.5" cy="1280.0" r="15.3"/>
<circle cx="924.2" cy="1254.2" r="15.3"/>
<circle cx="978.8" cy="1246.2" r="15.3"/>
<circle cx="708.2" cy="1272.5" r="15.3"/>
<circle cx="945.8" cy="1130.5" r="15.3"/>
<circle cx="1028.8" cy="1085.0" r="15.3"/>
<circle cx="1035.0" cy="1091.2" r="15.3"/>
<circle cx="1007.5" cy="948.8" r="15.3"/>
<circle cx="1021" cy="792" r="15.3"/>
<circle cx="668" cy="1347.5" r="15.3"/>
</g>
<rect x="0" y="353" width="2160" height="22" fill="url(#shd)"/>
</svg><!--MAPEND-->
</div>
<div id="zoom"><svg width="56" height="102" viewBox="0 0 56 102"><path d="M15.900 28.400H39.300M27.600 16.700V40.100M15.900 74.400H39.300" stroke="#fff" stroke-width="4.850"/></svg></div>
<div id="panel">
  <div class="abs" style="right:15px;top:22px;font-size:47.500px;line-height:56px;font-weight:700;color:#000;letter-spacing:-0.800px;white-space:nowrap;-webkit-text-stroke:0.700px #000">DinGeo</div>
  <div class="abs" style="right:14.500px;top:71px;font-size:24.500px;line-height:30px;font-weight:700;color:#4b8fc7;letter-spacing:1.350px;white-space:nowrap;-webkit-text-stroke:0.800px #4b8fc7">Boliga</div>
  <svg class="abs" style="left:0;top:0" width="531" height="840" viewBox="1607 456 531 840">
    <defs>
      <g id="school">
        <path d="M-16.700 -10.600H17.200L21.400 -3.600H-21.400Z" fill="#fff"/>
        <rect x="-20.400" y="-3.800" width="40.800" height="19.800" fill="#fff"/>
        <rect x="-21.200" y="14.200" width="42.400" height="2" fill="#fff"/>
        <path d="M-10.500 -3.600L0 -15.800L10.500 -3.600Z" fill="#fff"/>
        <path d="M-12.500 -3.400L0 -12.200L12.500 -3.400" fill="none" stroke="currentColor" stroke-width="1.300"/>
        <path d="M0 -15V-22" stroke="#fff" stroke-width="1.200"/>
        <rect x="0.500" y="-22" width="7" height="3.400" fill="#fff"/>
        <circle cx="0" cy="-1.300" r="2.800" fill="currentColor"/>
        <path d="M-1.700 13.600V9a1.700 1.700 0 0 1 3.400 0V13.600Z" fill="currentColor"/>
        <g fill="currentColor">
          <rect x="-16.300" y="1.800" width="3.200" height="3.200"/><rect x="-9.800" y="1.800" width="3.200" height="3.200"/>
          <rect x="-16.300" y="7.800" width="3.200" height="3.200"/><rect x="-9.800" y="7.800" width="3.200" height="3.200"/>
          <rect x="6.600" y="1.800" width="3.200" height="3.200"/><rect x="13.100" y="1.800" width="3.200" height="3.200"/>
          <rect x="6.600" y="7.800" width="3.200" height="3.200"/><rect x="13.100" y="7.800" width="3.200" height="3.200"/>
        </g>
      </g>
    </defs>
    <circle cx="1666.800" cy="770" r="29.900" fill="#06b394"/>
    <use href="#school" x="1666.800" y="770" color="#12b79a"/>
    <circle cx="1666.800" cy="830.300" r="29.900" fill="#0386d1"/>
    <use href="#school" x="1666.800" y="830.300" color="#1b93d8"/>
    <circle cx="1666.800" cy="890.800" r="29.300" fill="#f7ab0c" stroke="#2cb79b" stroke-width="1.400" stroke-dasharray="3 2"/>
    <use href="#school" x="1666.800" y="890.800" color="#35bda0"/>
  </svg>

  <div class="p" style="letter-spacing:0.55px;top:113px">Skoledistrikter og skoler</div>
  <div class="p" style="letter-spacing:0.52px;top:157px">i Randers Kommune</div>
  <hr style="top:242px">
  <div class="p" style="letter-spacing:0.16px;top:289px;left:98px">Folkeskoler</div>
  <div class="p" style="letter-spacing:0.47px;top:349px;left:98px">Privatskoler</div>
  <div class="p" style="letter-spacing:0.57px;top:409px;left:98px">Efterskoler m.m.</div>
  <hr style="top:504px">
  <div class="p" style="letter-spacing:0.58px;top:547px;font-size:24px;margin-top:0.5px;font-weight:700">Mere Info:</div>
  <div class="p" style="top:591px;font-size:24px;margin-top:0.5px"><a style="letter-spacing:0.47px">Grundskoler og Skoledistrikter</a></div>
  <div class="p" style="letter-spacing:0.68px;top:635px;font-size:24px;margin-top:0.5px;font-weight:700">Datakilder:</div>
  <div class="p" style="top:679px;font-size:24px;margin-top:0.5px"><a style="letter-spacing:0.52px">Det fælleskommunale geodatasamarbejde</a></div>
  <div class="p" style="top:723px;font-size:24px;margin-top:0.5px"><a style="letter-spacing:-0.77px">UVM</a></div>
  <div class="p" style="top:767px;font-size:24px;margin-top:0.5px"><a style="letter-spacing:-1.7px">SDFI</a></div>
</div>
</body>
</html>
